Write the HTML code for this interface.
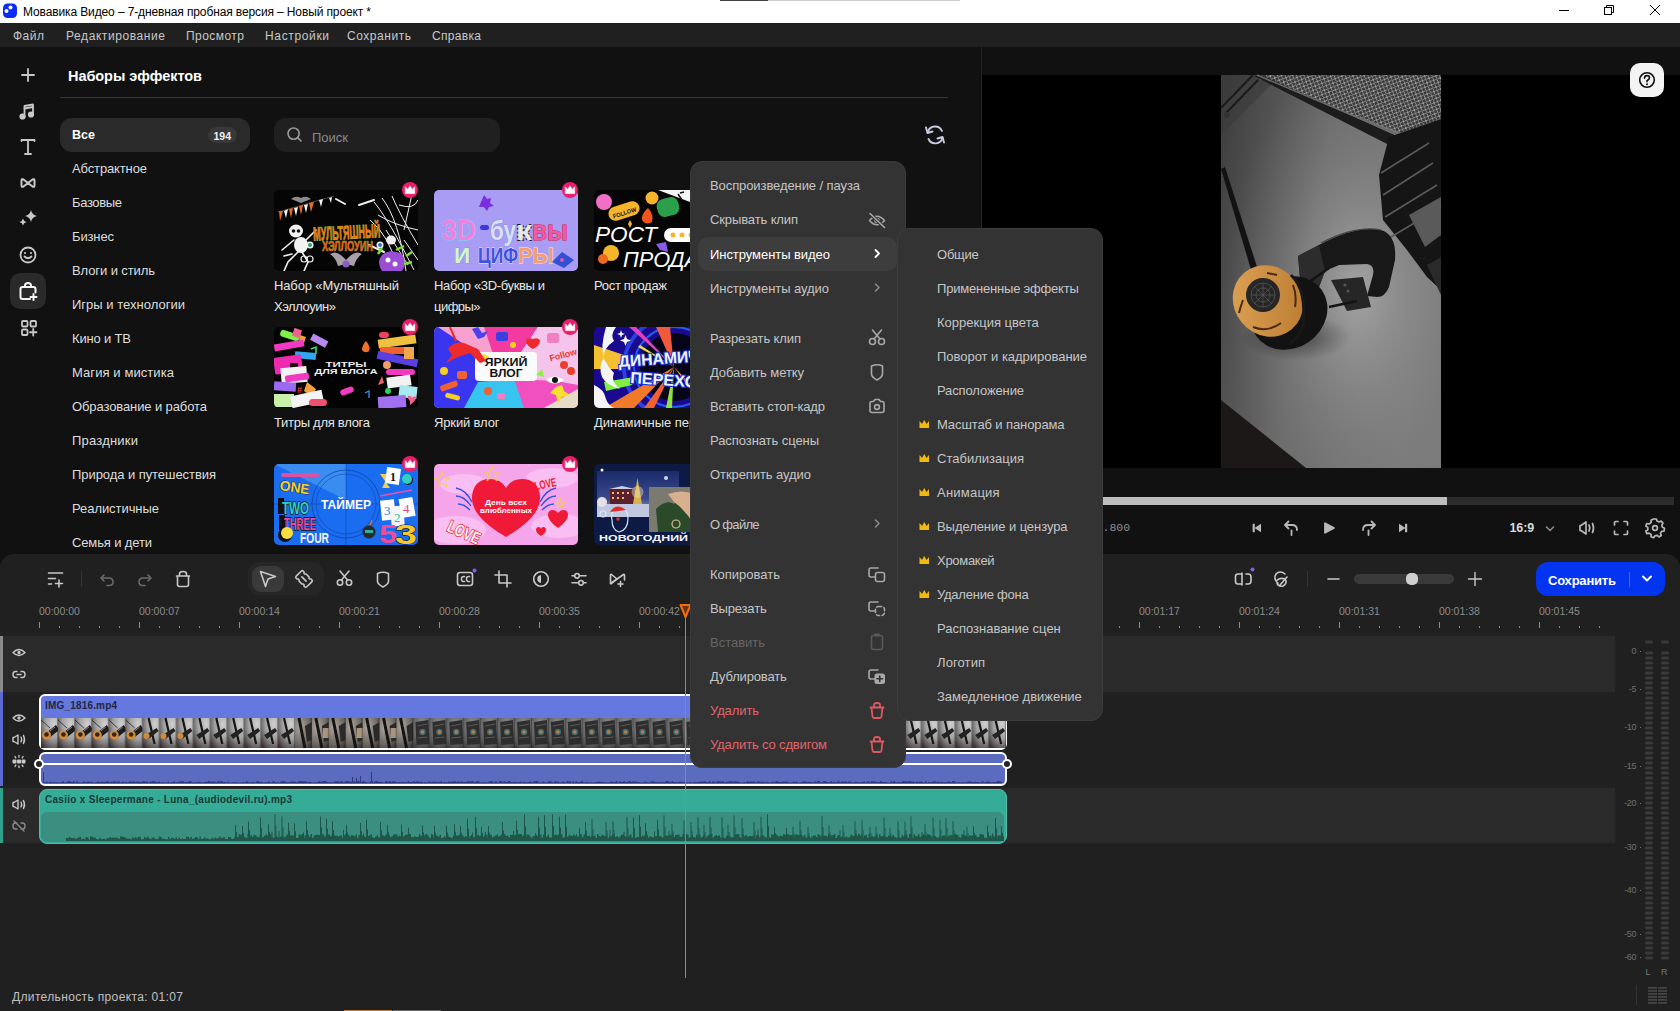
<!DOCTYPE html>
<html><head><meta charset="utf-8">
<style>
*{margin:0;padding:0;box-sizing:border-box}
html,body{width:1680px;height:1011px;overflow:hidden;background:#111;font-family:"Liberation Sans",sans-serif}
.a{position:absolute}
.t{position:absolute;white-space:nowrap;line-height:1}
svg{position:absolute;overflow:visible}
</style></head><body>
<div class="a" style="left:0px;top:0px;width:1680px;height:23px;background:#fff;"></div>
<svg style="left:0px;top:0px;" width="24" height="23" viewBox="0 0 24 23"><rect x="3" y="3.5" width="14" height="14.5" rx="4.5" fill="#0a2cf5"/><circle cx="10.5" cy="7.5" r="2" fill="#fff"/><circle cx="6.5" cy="11" r="2" fill="#fff"/></svg>
<div class="t" style="left:23px;top:5.84px;font-size:12px;color:#000;letter-spacing:-0.122px;">Мовавика Видео – 7-дневная пробная версия – Новый проект *</div>
<svg style="left:1540px;top:0px;" width="140" height="23" viewBox="0 0 140 23"><g stroke="#000" stroke-width="1" fill="none"><line x1="19" y1="10.5" x2="29" y2="10.5"/><rect x="64.5" y="7.5" width="7" height="7"/><path d="M66.5 7.5V5.5H73.5V12.5H71.5"/><path d="M110 5L120 15M120 5L110 15"/></g></svg>
<div class="a" style="left:720px;top:0px;width:48px;height:1px;background:#444;"></div>
<div class="a" style="left:768px;top:0px;width:192px;height:1px;background:#ccc;"></div>
<div class="a" style="left:0px;top:23px;width:1680px;height:24px;background:#202020;"></div>
<div class="t" style="left:13px;top:30.14px;font-size:12px;color:#c8c8c8;letter-spacing:0.499px;">Файл</div>
<div class="t" style="left:66px;top:30.14px;font-size:12px;color:#c8c8c8;letter-spacing:0.583px;">Редактирование</div>
<div class="t" style="left:186px;top:30.14px;font-size:12px;color:#c8c8c8;letter-spacing:0.457px;">Просмотр</div>
<div class="t" style="left:265px;top:30.14px;font-size:12px;color:#c8c8c8;letter-spacing:0.645px;">Настройки</div>
<div class="t" style="left:347px;top:30.14px;font-size:12px;color:#c8c8c8;letter-spacing:0.546px;">Сохранить</div>
<div class="t" style="left:432px;top:30.14px;font-size:12px;color:#c8c8c8;letter-spacing:0.321px;">Справка</div>
<div class="a" style="left:10px;top:273px;width:36px;height:36px;background:#2a2a2a;border-radius:10px"></div>
<svg style="left:0px;top:47px;" width="60" height="300" viewBox="0 0 60 300"><g fill="none" stroke="#c8c8c8" stroke-width="1.8" stroke-linecap="round" stroke-linejoin="round"><path d="M28 22V34M22 28H34"/><path d="M24.5 70V59L33 57.5V68"/><circle cx="22.5" cy="69.5" r="2.2" fill="#c8c8c8"/><circle cx="31" cy="67.5" r="2.2" fill="#c8c8c8"/><path d="M24.5 61.5L33 60"/><path d="M21.5 94V93H34.5V94M28 93V107M25 107H31"/><path d="M21.5 133.5Q21.5 131.5 23.5 132.5L28 136L32.5 132.5Q34.5 131.5 34.5 133.5V138.5Q34.5 140.5 32.5 139.5L28 136L23.5 139.5Q21.5 140.5 21.5 138.5Z" stroke-width="2"/><circle cx="28" cy="208" r="7.5"/><path d="M24.5 209.5Q28 213 31.5 209.5"/><path d="M30 252H22.5Q20.5 252 20.5 250V242Q20.5 240 22.5 240H33.5Q35.5 240 35.5 242V245.5M25 240V238.5Q25 236 28 236Q31 236 31 238.5V240M33.5 247V253M30.5 250H36.5" stroke="#f6f6f6" stroke-width="2"/><rect x="22" y="274" width="5.5" height="5.5" rx="1"/><rect x="30.5" y="274" width="5.5" height="5.5" rx="1"/><rect x="22" y="282.5" width="5.5" height="5.5" rx="1"/><path d="M33.25 282V288.5M30 285.25H36.5"/></g><g fill="#c8c8c8"><path d="M31 163Q32 168 37 169Q32 170 31 175Q30 170 25 169Q30 168 31 163Z"/><path d="M23 171.5Q23.6 174.4 26.5 175Q23.6 175.6 23 178.5Q22.4 175.6 19.5 175Q22.4 174.4 23 171.5Z"/><circle cx="25" cy="206" r="1.1"/><circle cx="31" cy="206" r="1.1"/></g></svg>
<div class="a" style="left:981px;top:47px;width:1px;height:507px;background:#222;"></div>
<div class="t" style="left:68px;top:68.73px;font-size:14.5px;color:#fff;font-weight:bold;letter-spacing:-0.058px;">Наборы эффектов</div>
<div class="a" style="left:60px;top:97px;width:888px;height:1px;background:#333;"></div>
<div class="a" style="left:60px;top:118px;width:190px;height:34px;background:#2a2a2a;border-radius:12px"></div>
<div class="a" style="left:208px;top:127px;width:29px;height:16px;background:#383838;border-radius:8px"></div>
<div class="t" style="left:213.5px;top:131.11px;font-size:10.5px;color:#eee;font-weight:bold;letter-spacing:-0.010px;">194</div>
<div class="t" style="left:72px;top:128.72px;font-size:12.5px;color:#fff;font-weight:bold;">Все</div>
<div class="t" style="left:72px;top:162.30px;font-size:13px;color:#dedede;letter-spacing:-0.131px;">Абстрактное</div>
<div class="t" style="left:72px;top:196.30px;font-size:13px;color:#dedede;letter-spacing:-0.357px;">Базовые</div>
<div class="t" style="left:72px;top:230.30px;font-size:13px;color:#dedede;letter-spacing:-0.133px;">Бизнес</div>
<div class="t" style="left:72px;top:264.30px;font-size:13px;color:#dedede;letter-spacing:-0.100px;">Влоги и стиль</div>
<div class="t" style="left:72px;top:298.30px;font-size:13px;color:#dedede;letter-spacing:0.016px;">Игры и технологии</div>
<div class="t" style="left:72px;top:332.30px;font-size:13px;color:#dedede;letter-spacing:-0.168px;">Кино и ТВ</div>
<div class="t" style="left:72px;top:366.30px;font-size:13px;color:#dedede;letter-spacing:0.082px;">Магия и мистика</div>
<div class="t" style="left:72px;top:400.30px;font-size:13px;color:#dedede;letter-spacing:-0.103px;">Образование и работа</div>
<div class="t" style="left:72px;top:434.30px;font-size:13px;color:#dedede;letter-spacing:0.211px;">Праздники</div>
<div class="t" style="left:72px;top:468.30px;font-size:13px;color:#dedede;letter-spacing:-0.061px;">Природа и путешествия</div>
<div class="t" style="left:72px;top:502.30px;font-size:13px;color:#dedede;letter-spacing:-0.059px;">Реалистичные</div>
<div class="t" style="left:72px;top:536.30px;font-size:13px;color:#dedede;letter-spacing:-0.132px;">Семья и дети</div>
<div class="a" style="left:274px;top:118px;width:226px;height:34px;background:#202020;border-radius:12px"></div>
<svg style="left:280px;top:120px;" width="30" height="30" viewBox="0 0 30 30"><g fill="none" stroke="#9a9a9a" stroke-width="1.6"><circle cx="13.6" cy="13.6" r="5.6"/><path d="M17.6 17.6L21 21" stroke-linecap="round"/></g></svg>
<div class="t" style="left:312px;top:131.00px;font-size:13px;color:#8a8a8a;letter-spacing:-0.006px;">Поиск</div>
<svg style="left:920px;top:120px;" width="30" height="30" viewBox="0 0 30 30"><g fill="none" stroke="#c9cbe0" stroke-width="1.9" stroke-linecap="round" stroke-linejoin="round"><path d="M8 11.5A7.5 7.5 0 0 1 22 11"/><path d="M22.5 18A7.5 7.5 0 0 1 8.5 19"/><path d="M6 7.5L7.5 13L12.5 11.5"/><path d="M24 22.5L22.5 17L17.5 18.5"/></g></svg>
<svg style="left:274px;top:190px" width="144" height="81" viewBox="0 0 144 81"><defs><clipPath id="c1"><rect width="144" height="81" rx="5"/></clipPath></defs><g clip-path="url(#c1)"><rect width="144" height="81" fill="#050505"/><path d="M4 22L60 6" stroke="#777" stroke-width="0.6"/><g fill="#ec6a1c"><path d="M5 21L9 21L6 31Z"/><path d="M15 19L19 18L17 28Z"/><path d="M25 16L29 15L27 25Z"/><path d="M35 13L40 12L37 22Z"/></g><g fill="#f2f2f2"><path d="M10 21L14 19L12 28Z"/><path d="M20 18L24 17L22 26Z"/><path d="M30 15L34 14L32 23Z"/><path d="M45 10L49 9L47 17Z"/><path d="M55 8L58 7L57 13Z"/></g><path d="M17 9Q22 5 27 8Q32 5 37 9L27 13Z" fill="#8a8a8a"/><g stroke="#eee" stroke-width="2" stroke-linecap="round"><path d="M62 9L71 14"/><path d="M85 15L100 10"/><path d="M95 55L110 62"/></g><g stroke="#f0f0f0" stroke-width="1" fill="none"><path d="M100 12Q115 30 140 80M108 8Q125 30 132 81M118 6Q126 25 144 55M104 25Q120 35 144 40M112 40L134 75M138 4L130 40M125 15Q140 20 144 10M96 30Q115 45 125 81M130 50L144 70"/></g><g fill="#f2f2f2"><ellipse cx="22" cy="41" rx="7" ry="6.5"/><ellipse cx="27" cy="55" rx="7" ry="8"/></g><g fill="#111"><circle cx="19.5" cy="41" r="1.8"/><circle cx="24.5" cy="41" r="1.8"/></g><g stroke="#f2f2f2" stroke-width="1.6" fill="none" stroke-linecap="round"><path d="M24 62L14 72L10 81M28 62L34 72L30 81M20 50L8 60M32 50L42 40M18 64L10 66"/></g><g fill="none" stroke="#eee" stroke-width="1.2"><circle cx="30" cy="69" r="3"/><circle cx="36" cy="69" r="3"/></g><text paint-order="stroke" x="39" y="49" font-family="Liberation Sans" font-weight="bold" font-size="19" fill="#f0781c" stroke="#7ac030" stroke-width="0.9" transform="rotate(-3 72 40)" textLength="67" lengthAdjust="spacingAndGlyphs">МУЛЬТЯШНЫЙ</text><text paint-order="stroke" x="48" y="61" font-family="Liberation Sans" font-weight="bold" font-size="15" fill="#ec5e1c" stroke="#6ab02a" stroke-width="0.7" textLength="51" lengthAdjust="spacingAndGlyphs">ХЭЛЛОУИН</text><path d="M56 64Q62 60 68 66L72 70L76 66Q82 60 88 64Q82 68 80 76L72 74L64 76Q62 68 56 64Z" fill="#a8a0a8"/><circle cx="72" cy="74" r="3.5" fill="#8a5cc0"/><circle cx="36" cy="55" r="3.5" fill="#f4f4f4"/><circle cx="36" cy="55" r="2" fill="#2aa060"/><circle cx="106" cy="55" r="3.5" fill="#f4f4f4"/><circle cx="106" cy="55" r="2" fill="#3070d0"/><ellipse cx="117" cy="50" rx="5" ry="4.5" fill="#eee"/><path d="M108 65Q116 58 128 64Q134 74 128 81H108Q102 72 108 65Z" fill="#9a4ed6"/><path d="M104 64L108 58M122 60L130 56M132 66L138 62M130 74L138 72" stroke="#7ee02a" stroke-width="2.5"/><circle cx="114" cy="70" r="2.5" fill="#fff"/><circle cx="121" cy="74" r="2.5" fill="#fff"/></g></svg>
<svg style="left:402px;top:182px" width="16" height="16" viewBox="0 0 16 16"><circle cx="8" cy="8" r="8" fill="#ea1f6a"/><path d="M3.3 4.8L5.7 7.4L8 3.9L10.3 7.4L12.7 4.8V11.6H3.3Z" fill="#fff" stroke="#fff" stroke-width="0.6" stroke-linejoin="round"/></svg>
<svg style="left:434px;top:190px" width="144" height="81" viewBox="0 0 144 81"><defs><clipPath id="c2"><rect width="144" height="81" rx="5"/></clipPath></defs><g clip-path="url(#c2)"><rect width="144" height="81" fill="#a99cf4"/><path d="M50 5L53 9L57 8L56 13L60 16L55 17L53 21L50 17L45 17L47 12Z" fill="#7a2ee0"/><text paint-order="stroke" x="8" y="50" font-family="Liberation Sans" font-weight="bold" font-size="30" fill="#f080e0" stroke="#80c8f8" stroke-width="1.5" textLength="34" lengthAdjust="spacingAndGlyphs">3D</text><rect x="46" y="35" width="9" height="5" rx="2.5" fill="#3a3ad8"/><text paint-order="stroke" x="56" y="50" font-family="Liberation Sans" font-weight="bold" font-size="28" fill="#d8e0fa" stroke="#8090e8" stroke-width="1.2" textLength="26" lengthAdjust="spacingAndGlyphs">бу</text><text paint-order="stroke" x="82" y="50" font-family="Liberation Sans" font-weight="bold" font-size="28" fill="#e8e8e8" stroke="#222" stroke-width="2" stroke-dasharray="2 2" textLength="16" lengthAdjust="spacingAndGlyphs">к</text><text paint-order="stroke" x="98" y="50" font-family="Liberation Sans" font-weight="bold" font-size="28" fill="#f05aa0" stroke="#d02040" stroke-width="1" textLength="36" lengthAdjust="spacingAndGlyphs">вы</text><text paint-order="stroke" x="20" y="73" font-family="Liberation Sans" font-weight="bold" font-size="22" fill="#e0f0c0" stroke="#40c0f0" stroke-width="1.2" textLength="16" lengthAdjust="spacingAndGlyphs">И</text><text paint-order="stroke" x="44" y="73" font-family="Liberation Sans" font-weight="bold" font-size="22" fill="#4050e0" stroke="#f0f0ff" stroke-width="0.8" textLength="40" lengthAdjust="spacingAndGlyphs">ЦИФ</text><text paint-order="stroke" x="84" y="73" font-family="Liberation Sans" font-weight="bold" font-size="22" fill="#f0a070" stroke="#f0f0f0" stroke-width="0.8" textLength="36" lengthAdjust="spacingAndGlyphs">РЫ</text><path d="M118 72L128 62L140 70L130 78Z" fill="#3050d8"/><circle cx="128" cy="70" r="2" fill="#f050a0"/></g></svg>
<svg style="left:562px;top:182px" width="16" height="16" viewBox="0 0 16 16"><circle cx="8" cy="8" r="8" fill="#ea1f6a"/><path d="M3.3 4.8L5.7 7.4L8 3.9L10.3 7.4L12.7 4.8V11.6H3.3Z" fill="#fff" stroke="#fff" stroke-width="0.6" stroke-linejoin="round"/></svg>
<svg style="left:594px;top:190px" width="144" height="81" viewBox="0 0 144 81"><defs><clipPath id="c3"><rect width="144" height="81" rx="5"/></clipPath></defs><g clip-path="url(#c3)"><rect width="144" height="81" fill="#050505"/><path d="M64 0H144V30Z" fill="#f4f4f4"/><path d="M84 4L88 10M86 3L90 2" stroke="#111" stroke-width="1.5"/><circle cx="10" cy="12" r="8" fill="#f070c8"/><rect x="14" y="14" width="32" height="14" rx="7" fill="#f5b52a" transform="rotate(-18 30 21)"/><text paint-order="stroke" x="18" y="25" font-family="Liberation Sans" font-weight="bold" font-size="6" fill="#111" transform="rotate(-18 30 21)" textLength="24" lengthAdjust="spacingAndGlyphs">FOLLOW</text><circle cx="58" cy="8" r="6.5" fill="#f5b52a"/><rect x="63" y="8" width="22" height="18" rx="7" fill="#2aa04a" transform="rotate(-15 74 17)"/><path d="M54 18Q60 24 58 32Q52 36 48 30Q47 24 54 18Z" fill="#f0541c"/><path d="M36 30L38 34L36 38L34 34Z" fill="#f5b52a"/><text paint-order="stroke" x="1" y="52" font-family="Liberation Sans" font-style="italic" font-size="22" fill="#fff" textLength="62" lengthAdjust="spacingAndGlyphs">РОСТ</text><rect x="70" y="38" width="40" height="14" rx="7" fill="#fff"/><g fill="#f5b52a"><circle cx="79" cy="45" r="2.5"/><circle cx="88" cy="45" r="2.5"/><circle cx="97" cy="45" r="2.5"/></g><text paint-order="stroke" x="29" y="77" font-family="Liberation Sans" font-style="italic" font-size="22" fill="#fff" textLength="96" lengthAdjust="spacingAndGlyphs">ПРОДАЖ</text><circle cx="17" cy="63" r="8" fill="#f5b52a"/><circle cx="9" cy="69" r="5" fill="#f06a1c"/><path d="M62 54L72 52L74 62L66 60Z" fill="#8a5ae8"/><path d="M96 30L100 26L102 34Z" fill="#f5b52a"/></g></svg>
<svg style="left:722px;top:182px" width="16" height="16" viewBox="0 0 16 16"><circle cx="8" cy="8" r="8" fill="#ea1f6a"/><path d="M3.3 4.8L5.7 7.4L8 3.9L10.3 7.4L12.7 4.8V11.6H3.3Z" fill="#fff" stroke="#fff" stroke-width="0.6" stroke-linejoin="round"/></svg>
<svg style="left:274px;top:327px" width="144" height="81" viewBox="0 0 144 81"><defs><clipPath id="c4"><rect width="144" height="81" rx="5"/></clipPath></defs><g clip-path="url(#c4)"><rect width="144" height="81" fill="#030303"/><rect x="6" y="5" width="20" height="7" rx="3.5" fill="#7ef04a" transform="rotate(18 16 8)"/><rect x="19" y="2" width="8" height="8" fill="#f06090" transform="rotate(20 23 6)"/><path d="M26 8L32 10L30 16L25 14Z" fill="#f0a040"/><rect x="0" y="15" width="30" height="7" fill="#f03ac0" transform="rotate(-10 15 18)"/><rect x="37" y="10" width="17" height="7" fill="#b88af0" transform="rotate(28 45 13)"/><path d="M37 22L42 20V27" stroke="#40e080" stroke-width="1.5" fill="none"/><rect x="21" y="25" width="21" height="7" fill="#30a8f0" transform="rotate(5 31 28)"/><rect x="0" y="29" width="28" height="17" rx="2" fill="#f02ab0" transform="rotate(-8 14 37)"/><rect x="16" y="36" width="8" height="6" rx="1" fill="#111"/><rect x="7" y="40" width="26" height="16" fill="#f2f2f2" transform="rotate(-5 20 48)"/><rect x="11" y="47" width="24" height="7" rx="2" fill="#f03ac0" transform="rotate(-8 23 50)"/><rect x="0" y="55" width="22" height="9" fill="#9a6af0" transform="rotate(4 11 59)"/><text paint-order="stroke" x="23" y="66" font-family="Liberation Sans" font-weight="bold" font-size="9" fill="#f04040">#</text><path d="M33 55L42 62L38 70L30 64Z" fill="#f0a040"/><rect x="0" y="67" width="20" height="13" fill="#c8f0a8"/><rect x="17" y="66" width="32" height="12" fill="#f4f4f4" transform="rotate(-12 33 72)"/><rect x="35" y="72" width="18" height="7" rx="3.5" fill="#f05070"/><rect x="104" y="10" width="38" height="9" fill="#f0c040" transform="rotate(-8 123 14)"/><rect x="106" y="20" width="32" height="7" rx="2" fill="#f06030"/><rect x="103" y="28" width="41" height="8" fill="#5a40e0" transform="rotate(12 123 32)"/><rect x="130" y="20" width="10" height="12" fill="#f0a850"/><rect x="112" y="42" width="29" height="6" rx="3" fill="#f03ac0"/><circle cx="113" cy="38" r="4" fill="#f0a060"/><rect x="113" y="49" width="24" height="11" fill="#f2f2f2" transform="rotate(-8 125 55)"/><path d="M108 49L110 56L104 58Z" fill="#f06070"/><rect x="125" y="59" width="18" height="12" fill="#a8e8f0" transform="rotate(6 134 65)"/><circle cx="114" cy="64" r="3" fill="#30d060"/><rect x="104" y="69" width="28" height="12" fill="#a070f0" transform="rotate(-4 118 75)"/><path d="M136 74Q133 71 134 69Q137 68 138 71Q140 68 142 70Q142 74 136 78Z" fill="#f06090"/><rect x="105" y="5" width="10" height="6" rx="3" fill="#f04060"/><path d="M92 14Q97 20 95 24Q91 27 88 23Q88 18 92 14Z" fill="#f07030"/><rect x="66" y="61" width="14" height="6" rx="3" fill="#f03ac0" transform="rotate(-20 73 64)"/><path d="M91 66L95 64V71" stroke="#4090f0" stroke-width="1.3" fill="none"/><text paint-order="stroke" x="72" y="39.5" font-family="Liberation Sans" font-weight="bold" font-size="7.5" fill="#f0f0f0" text-anchor="middle" textLength="41" lengthAdjust="spacingAndGlyphs">ТИТРЫ</text><text paint-order="stroke" x="72" y="47.2" font-family="Liberation Sans" font-weight="bold" font-size="7.5" fill="#f0f0f0" text-anchor="middle" textLength="63" lengthAdjust="spacingAndGlyphs">ДЛЯ ВЛОГА</text></g></svg>
<svg style="left:402px;top:319px" width="16" height="16" viewBox="0 0 16 16"><circle cx="8" cy="8" r="8" fill="#ea1f6a"/><path d="M3.3 4.8L5.7 7.4L8 3.9L10.3 7.4L12.7 4.8V11.6H3.3Z" fill="#fff" stroke="#fff" stroke-width="0.6" stroke-linejoin="round"/></svg>
<svg style="left:434px;top:327px" width="144" height="81" viewBox="0 0 144 81"><defs><clipPath id="c5"><rect width="144" height="81" rx="5"/></clipPath></defs><g clip-path="url(#c5)"><rect width="144" height="81" fill="#f5b8e0"/><path d="M0 0H20L60 45L44 81H0Z" fill="#3a36f0"/><path d="M4 0H50L60 30L40 24Z" fill="#f8a0d0"/><path d="M50 0H104L86 27L60 30Z" fill="#f23aa0"/><path d="M104 0H144V58L100 50L86 27Z" fill="#f5c4ec"/><path d="M30 81L44 55L80 52L95 81Z" fill="#38c4f0"/><path d="M80 52L122 54L144 58V81H90Z" fill="#f050c0"/><path d="M110 81L144 62V81Z" fill="#e8dcc8"/><rect x="41" y="25" width="62" height="29" rx="4" fill="#fbfbfb"/><path d="M48 26L56 30L52 36Z" fill="#f5e030"/><text paint-order="stroke" x="72" y="39" font-family="Liberation Sans" font-weight="bold" font-size="10" fill="#111" text-anchor="middle" textLength="43" lengthAdjust="spacingAndGlyphs">ЯРКИЙ</text><text paint-order="stroke" x="72" y="50" font-family="Liberation Sans" font-weight="bold" font-size="10" fill="#111" text-anchor="middle" textLength="33" lengthAdjust="spacingAndGlyphs">ВЛОГ</text><path d="M14 22Q20 14 30 16L44 22L52 34L46 36L36 26L24 30L12 36L18 28Z" fill="#ee2a2a"/><path d="M16 0L22 14" stroke="#ee2a2a" stroke-width="2"/><path d="M38 2L44 0L48 6L54 4L50 10L44 12Z" fill="#4a40f0"/><rect x="62" y="5" width="12" height="9" rx="2" fill="#3a40e0"/><circle cx="79" cy="18" r="3" fill="#f5d020"/><path d="M92 13Q95 10 99 12Q103 10 106 13Q106 19 99 22Q92 19 92 13Z" fill="#ee2a2a"/><rect x="113" y="6" width="12" height="10" rx="2" fill="#f080c0"/><text paint-order="stroke" x="115" y="32" font-family="Liberation Sans" font-weight="bold" font-size="9" fill="#e83a2a" transform="rotate(-15 125 28)" textLength="28" lengthAdjust="spacingAndGlyphs">Follow</text><circle cx="130" cy="38" r="4" fill="#e8402a"/><circle cx="137" cy="44" r="4" fill="#e8402a"/><circle cx="10" cy="44" r="4" fill="#f5d020"/><rect x="23" y="44" width="10" height="8" rx="2" fill="#f06030"/><rect x="6" y="56" width="18" height="6" rx="2" fill="#f06030" transform="rotate(-20 15 59)"/><rect x="11" y="67" width="15" height="5" rx="2.5" fill="#f5d020" transform="rotate(15 18 70)"/><circle cx="54" cy="64" r="4" fill="#f06030"/><rect x="63" y="66" width="8" height="6" rx="1" fill="#f080c0"/><path d="M112 53Q120 46 130 53Q120 60 112 53Z" fill="#fff"/><circle cx="121" cy="53" r="3" fill="#111"/><path d="M122 60L128 58L130 64L136 68L128 70L124 76L122 68L116 66Z" fill="#f5e030"/><path d="M102 48L108 42L110 50Z" fill="#90f040"/></g></svg>
<svg style="left:562px;top:319px" width="16" height="16" viewBox="0 0 16 16"><circle cx="8" cy="8" r="8" fill="#ea1f6a"/><path d="M3.3 4.8L5.7 7.4L8 3.9L10.3 7.4L12.7 4.8V11.6H3.3Z" fill="#fff" stroke="#fff" stroke-width="0.6" stroke-linejoin="round"/></svg>
<svg style="left:594px;top:327px" width="144" height="81" viewBox="0 0 144 81"><defs><clipPath id="c6"><rect width="144" height="81" rx="5"/></clipPath></defs><g clip-path="url(#c6)"><rect width="144" height="81" fill="#1a0a90"/><circle cx="80" cy="40" r="50" fill="none" stroke="#2a40e0" stroke-width="4"/><circle cx="80" cy="40" r="40" fill="none" stroke="#2060f0" stroke-width="2"/><circle cx="80" cy="40" r="34" fill="#060418"/><path d="M80 40L62 0H76Z" fill="#f05a3a"/><path d="M80 40L35 0H42Z" fill="#e040c0"/><path d="M80 40L46 18L44 20Z" fill="#f0e040"/><path d="M80 40L72 81H78Z" fill="#90e040"/><path d="M80 40L50 81H60Z" fill="#f06030"/><path d="M80 40L10 81H40Z" fill="#f07a2a"/><path d="M80 40L110 81H120Z" fill="#f0a030"/><path d="M10 55L40 50L38 58L12 64Z" fill="#80f040"/><path d="M0 18L30 28L28 42L0 42Z" fill="#f5c030"/><path d="M12 0H22Q16 8 20 14Q8 22 10 32Q14 40 20 46Q16 54 26 62Q12 58 8 50Q4 40 10 30Q6 20 12 0Z" fill="#f4f4f4"/><path d="M0 58Q10 62 12 72Q14 78 20 81H0Z" fill="#f4f4f4"/><path d="M26 6L27 3L28 6L31 7L28 8L27 11L26 8L23 7Z" fill="#fff"/><path d="M30 12L31.5 8L33 12L37 13.5L33 15L31.5 19L30 15L26 13.5Z" fill="#fff"/><text paint-order="stroke" x="25" y="40" font-family="Liberation Sans" font-weight="bold" font-size="16" fill="#f0f4ff" stroke="#1830d0" stroke-width="2.2" transform="rotate(-4 25 40)" textLength="118" lengthAdjust="spacingAndGlyphs">ДИНАМИЧНЫЕ</text><text paint-order="stroke" x="36" y="56" font-family="Liberation Sans" font-weight="bold" font-size="16" fill="#f0f4ff" stroke="#1830d0" stroke-width="2.2" transform="rotate(4 36 56)" textLength="94" lengthAdjust="spacingAndGlyphs">ПЕРЕХОДЫ</text></g></svg>
<svg style="left:722px;top:319px" width="16" height="16" viewBox="0 0 16 16"><circle cx="8" cy="8" r="8" fill="#ea1f6a"/><path d="M3.3 4.8L5.7 7.4L8 3.9L10.3 7.4L12.7 4.8V11.6H3.3Z" fill="#fff" stroke="#fff" stroke-width="0.6" stroke-linejoin="round"/></svg>
<svg style="left:274px;top:464px" width="144" height="81" viewBox="0 0 144 81"><defs><clipPath id="c7"><rect width="144" height="81" rx="5"/></clipPath></defs><g clip-path="url(#c7)"><rect width="144" height="81" fill="#1a6cf0"/><path d="M0 0H72V36Z" fill="#3a8cf0"/><circle cx="72" cy="40" r="34" fill="none" stroke="#0a40a0" stroke-width="0.7"/><circle cx="72" cy="40" r="30" fill="none" stroke="#0a40a0" stroke-width="0.5"/><path d="M72 0V81M0 40H144" stroke="#0a40a0" stroke-width="0.5"/><text paint-order="stroke" x="72" y="45" font-family="Liberation Sans" font-weight="bold" font-size="12" fill="#fff" text-anchor="middle" textLength="50" lengthAdjust="spacingAndGlyphs">ТАЙМЕР</text><rect x="7" y="9" width="38" height="4" rx="2" fill="#e050a0"/><text paint-order="stroke" x="6" y="28" font-family="Liberation Sans" font-weight="bold" font-size="14" fill="#f5d030" stroke="#1a1a1a" stroke-width="0.8" transform="rotate(8 20 22)" textLength="30" lengthAdjust="spacingAndGlyphs">ONE</text><rect x="4" y="34" width="6" height="16" fill="#111"/><text paint-order="stroke" x="8" y="50" font-family="Liberation Sans" font-weight="bold" font-size="17" fill="#30d0c0" stroke="#111" stroke-width="1.5" textLength="27" lengthAdjust="spacingAndGlyphs">TWO</text><rect x="5" y="51" width="6" height="15" fill="#111"/><text paint-order="stroke" x="10" y="66" font-family="Liberation Sans" font-weight="bold" font-size="16" fill="#f04a9a" stroke="#111" stroke-width="1.5" textLength="32" lengthAdjust="spacingAndGlyphs">THREE</text><circle cx="11" cy="71" r="7" fill="#111"/><circle cx="13" cy="69" r="6" fill="#f5e040"/><text paint-order="stroke" x="26" y="79" font-family="Liberation Sans" font-weight="bold" font-size="15" fill="#f4f4f4" textLength="29" lengthAdjust="spacingAndGlyphs">FOUR</text><path d="M106 10H115L108 24H116Z" fill="#f0d050"/><rect x="112" y="4" width="14" height="16" fill="#fff" transform="rotate(8 119 12)"/><text paint-order="stroke" x="116" y="17" font-family="Liberation Serif" font-weight="bold" font-size="12" fill="#111">1</text><circle cx="134" cy="16" r="5" fill="#111"/><circle cx="133" cy="15" r="5" fill="#30d0c0"/><path d="M106 32L138 26" stroke="#f050b0" stroke-width="1.5"/><rect x="107" y="36" width="14" height="20" fill="#fff" transform="rotate(-6 114 46)"/><rect x="117" y="42" width="13" height="20" fill="#f4f4f4" transform="rotate(-4 123 52)"/><rect x="126" y="34" width="14" height="19" fill="#fff" transform="rotate(-10 133 43)"/><text paint-order="stroke" x="110" y="51" font-family="Liberation Serif" font-size="13" fill="#2a80e0">3</text><text paint-order="stroke" x="120" y="58" font-family="Liberation Serif" font-size="13" fill="#30c0a0">2</text><text paint-order="stroke" x="129" y="49" font-family="Liberation Serif" font-size="13" fill="#e04a8a">4</text><text paint-order="stroke" x="105" y="79" font-family="Liberation Sans" font-weight="bold" font-size="26" fill="#f04a9a" textLength="18" lengthAdjust="spacingAndGlyphs">5</text><text paint-order="stroke" x="121" y="80" font-family="Liberation Sans" font-weight="bold" font-size="28" fill="#f5c830" stroke="#111" stroke-width="1" textLength="22" lengthAdjust="spacingAndGlyphs">3</text><circle cx="95" cy="68" r="6.5" fill="#2a2a2a"/><rect x="91" y="66" width="8" height="3" fill="#30b0a0"/><path d="M96 61L98 56" stroke="#f06a20" stroke-width="1.2"/></g></svg>
<svg style="left:402px;top:456px" width="16" height="16" viewBox="0 0 16 16"><circle cx="8" cy="8" r="8" fill="#ea1f6a"/><path d="M3.3 4.8L5.7 7.4L8 3.9L10.3 7.4L12.7 4.8V11.6H3.3Z" fill="#fff" stroke="#fff" stroke-width="0.6" stroke-linejoin="round"/></svg>
<svg style="left:434px;top:464px" width="144" height="81" viewBox="0 0 144 81"><defs><clipPath id="c8"><rect width="144" height="81" rx="5"/></clipPath></defs><g clip-path="url(#c8)"><rect width="144" height="81" fill="#f5a6ea"/><g fill="#f9bef2"><ellipse cx="22" cy="66" rx="30" ry="14"/><ellipse cx="125" cy="62" rx="28" ry="12"/><ellipse cx="30" cy="20" rx="24" ry="10"/><ellipse cx="118" cy="14" rx="26" ry="10"/></g><path d="M72 73Q36 52 38 32Q40 15 56 15Q67 15 72 24Q77 15 88 15Q104 15 106 32Q108 52 72 73Z" fill="#f01a38"/><text paint-order="stroke" x="72" y="41" font-family="Liberation Sans" font-weight="bold" font-size="8" fill="#fff" text-anchor="middle" textLength="42" lengthAdjust="spacingAndGlyphs">День всех</text><text paint-order="stroke" x="72" y="48.5" font-family="Liberation Sans" font-weight="bold" font-size="8" fill="#fff" text-anchor="middle" textLength="52" lengthAdjust="spacingAndGlyphs">влюбленных</text><g fill="none" stroke="#3050e0" stroke-width="1.3"><path d="M22 24Q32 26 38 38M22 32Q30 32 37 42M24 40Q30 40 36 46"/><path d="M122 24Q112 26 106 38M122 32Q114 32 107 42M120 40Q114 40 108 46"/></g><g fill="none" stroke="#f0d040" stroke-width="0.9"><path d="M8 8L10 14L16 14L11 17L13 23L8 19L3 23L5 17L0 14L6 14Z"/><path d="M58 2L60 8L66 8L61 11L63 17L58 13L53 17L55 11L50 8L56 8Z"/><path d="M126 34L127 38L131 38L128 40L129 44L126 42L123 44L124 40L121 38L125 38Z"/></g><text paint-order="stroke" x="14" y="74" font-family="Liberation Sans" font-weight="bold" font-size="17" fill="#f5f0f8" stroke="#f02030" stroke-width="1.6" transform="rotate(25 30 66)" textLength="34" lengthAdjust="spacingAndGlyphs">LOVE</text><text paint-order="stroke" x="100" y="24" font-family="Liberation Sans" font-weight="bold" font-size="12" fill="#f02030" transform="rotate(-12 112 18)" textLength="22" lengthAdjust="spacingAndGlyphs">LOVE</text><path d="M124 64Q114 57 114 51Q114 46 119 46Q122 46 124 49Q126 46 129 46Q134 46 134 51Q134 57 124 64Z" fill="#f01a38"/><path d="M107 72Q102 69 102 66Q102 63 105 63Q106.5 63 107 65Q107.5 63 109 63Q112 63 112 66Q112 69 107 72Z" fill="#f01a38"/></g></svg>
<svg style="left:562px;top:456px" width="16" height="16" viewBox="0 0 16 16"><circle cx="8" cy="8" r="8" fill="#ea1f6a"/><path d="M3.3 4.8L5.7 7.4L8 3.9L10.3 7.4L12.7 4.8V11.6H3.3Z" fill="#fff" stroke="#fff" stroke-width="0.6" stroke-linejoin="round"/></svg>
<svg style="left:594px;top:464px" width="144" height="81" viewBox="0 0 144 81"><defs><clipPath id="c9"><rect width="144" height="81" rx="5"/></clipPath></defs><g clip-path="url(#c9)"><defs><linearGradient id="nsky" x1="0" y1="0" x2="0" y2="1"><stop offset="0" stop-color="#1a2a6a"/><stop offset="0.6" stop-color="#3a4a8a"/><stop offset="1" stop-color="#b0b8d8"/></linearGradient></defs><rect width="144" height="81" fill="#0c1a44"/><rect x="3" y="7" width="82" height="46" fill="url(#nsky)"/><rect x="3" y="40" width="82" height="13" fill="#c0c8e0"/><rect x="16" y="24" width="24" height="16" fill="#5a2030"/><path d="M15 25L28 22L41 25Z" fill="#c8d0e8"/><g fill="#f0c060"><rect x="18" y="28" width="2" height="2"/><rect x="23" y="28" width="2" height="2"/><rect x="28" y="28" width="2" height="2"/><rect x="33" y="28" width="2" height="2"/><rect x="18" y="33" width="2" height="2"/><rect x="23" y="33" width="2" height="2"/><rect x="28" y="33" width="2" height="2"/></g><path d="M39 40L43.5 14L48 40Z" fill="#d8b050"/><circle cx="43.5" cy="28" r="6" fill="#f8e0a0" opacity="0.45"/><circle cx="8" cy="38" r="5" fill="#e8e0e8"/><rect x="55" y="23" width="89" height="45" fill="#7a7a70"/><path d="M62 45Q72 35 80 40Q86 30 96 38L100 68H64Z" fill="#2a4a2a"/><path d="M74 30Q88 25 100 30L100 60Q90 45 80 38Z" fill="#d8b090"/><circle cx="82" cy="60" r="4" fill="none" stroke="#e0c0a0" stroke-width="1.2"/><circle cx="72" cy="14" r="2" fill="#fff" opacity="0.8"/><circle cx="8" cy="6" r="1.5" fill="#fff"/><g fill="none" stroke="#d8e8ff" stroke-width="1.2"><path d="M18 56Q16 46 24 44Q34 44 34 54Q34 66 25 68Q18 66 18 56Z"/><circle cx="9" cy="50" r="3"/></g><path d="M16 48Q22 38 32 46Z" fill="#e02a2a"/><circle cx="24" cy="55" r="1.8" fill="#e02a2a"/><text paint-order="stroke" x="5" y="77" font-family="Liberation Sans" font-weight="bold" font-size="8.5" fill="#f4f4f4" textLength="89" lengthAdjust="spacingAndGlyphs">НОВОГОДНИЙ</text></g></svg>
<div class="t" style="left:274px;top:279.00px;font-size:13px;color:#e6e6e6;letter-spacing:-0.132px;">Набор «Мультяшный</div>
<div class="t" style="left:274px;top:299.50px;font-size:13px;color:#e6e6e6;letter-spacing:-0.449px;">Хэллоуин»</div>
<div class="t" style="left:434px;top:279.00px;font-size:13px;color:#e6e6e6;letter-spacing:-0.362px;">Набор «3D-буквы и</div>
<div class="t" style="left:434px;top:299.50px;font-size:13px;color:#e6e6e6;letter-spacing:-0.521px;">цифры»</div>
<div class="t" style="left:594px;top:279.00px;font-size:13px;color:#e6e6e6;letter-spacing:-0.312px;">Рост продаж</div>
<div class="t" style="left:274px;top:416.00px;font-size:13px;color:#e6e6e6;letter-spacing:-0.275px;">Титры для влога</div>
<div class="t" style="left:434px;top:416.00px;font-size:13px;color:#e6e6e6;letter-spacing:-0.139px;">Яркий влог</div>
<div class="t" style="left:594px;top:416.00px;font-size:13px;color:#e6e6e6;">Динамичные переходы</div>
<div class="a" style="left:982px;top:75px;width:698px;height:393px;background:#000;"></div>
<svg style="left:1221px;top:75px" width="220" height="393" viewBox="0 0 220 393"><defs><linearGradient id="vlin" x1="0" y1="0" x2="1" y2="0.3"><stop offset="0" stop-color="#3c3c3c"/><stop offset="0.5" stop-color="#6a6a6a"/><stop offset="1" stop-color="#7a7a7a"/></linearGradient><radialGradient id="vhl" cx="0.62" cy="0.55" r="0.6"><stop offset="0" stop-color="#b0b0b0" stop-opacity="0.8"/><stop offset="0.6" stop-color="#909090" stop-opacity="0.3"/><stop offset="1" stop-color="#808080" stop-opacity="0"/></radialGradient><linearGradient id="vwood" x1="0" y1="0" x2="1" y2="1"><stop offset="0" stop-color="#e0a558"/><stop offset="1" stop-color="#b8782e"/></linearGradient><pattern id="mesh" width="5" height="5" patternUnits="userSpaceOnUse" patternTransform="rotate(25)"><rect width="5" height="5" fill="#3a3a3a"/><path d="M0 0L5 5M5 0L0 5" stroke="#9a9a9a" stroke-width="1"/></pattern><radialGradient id="vshadow" cx="0.5" cy="0.5" r="0.5"><stop offset="0" stop-color="#000" stop-opacity="0.45"/><stop offset="1" stop-color="#000" stop-opacity="0"/></radialGradient></defs><rect width="220" height="393" fill="url(#vlin)"/><rect width="220" height="393" fill="url(#vhl)"/><path d="M0 0H60L0 60Z" fill="#3a3a3a" opacity="0.6"/><path d="M38 0H220V44L180 58L38 4Z" fill="url(#mesh)"/><path d="M33 1L40 0L178 62L172 72Z" fill="#1c1c1c"/><path d="M36 0L178 60" stroke="#6a6a6a" stroke-width="1.5"/><path d="M0 33L32 0M5 38L37 5" stroke="#1a1a1a" stroke-width="2"/><circle cx="6" cy="40" r="3" fill="#333"/><path d="M168 62L220 44V215L206 202L186 175L162 145L158 100Z" fill="#151515"/><path d="M160 98L208 68M162 120L212 88M164 142L216 110M170 162L220 132" stroke="#5a5a5a" stroke-width="1.6"/><path d="M188 140L220 122V160L204 172Z" fill="#5a5a5a"/><path d="M206 190L220 182V220Z" fill="#2a2a2a"/><path d="M0 94L4 92L37 195L31 198Z" fill="#121212"/><ellipse cx="75" cy="262" rx="55" ry="24" fill="url(#vshadow)"/><path d="M77 181L98 170Q135 150 160 155Q176 160 174 185L168 212Q164 222 156 222L146 221L152 200Q154 190 146 189L118 190L104 196L98 212L80 214Z" fill="#181818"/><path d="M77 181L98 170L104 196L98 212L80 214Z" fill="#2c2c2c"/><path d="M100 168Q135 150 160 155" fill="none" stroke="#444" stroke-width="1.2"/><path d="M110 205L142 202L150 232L126 236Z" fill="#262626"/><circle cx="124" cy="210" r="1.6" fill="#555"/><circle cx="127" cy="216" r="1.6" fill="#555"/><path d="M84 210L108 193M108 232L136 226" stroke="#141414" stroke-width="2.5"/><ellipse cx="68" cy="238" rx="40" ry="35" fill="#121212" transform="rotate(-35 68 238)"/><ellipse cx="47" cy="226" rx="34" ry="37" fill="url(#vwood)" transform="rotate(-40 47 226)"/><path d="M70 200Q86 215 82 250Q78 262 70 268" fill="none" stroke="#181818" stroke-width="3"/><circle cx="42" cy="220" r="17" fill="#262626"/><g stroke="#5a5a5a" stroke-width="0.7" fill="none"><circle cx="42" cy="220" r="12"/><circle cx="42" cy="220" r="7"/><path d="M30 220H54M42 208V232M33 211L51 229M51 211L33 229"/></g><path d="M32 252Q46 258 60 248M72 210Q76 220 74 232M18 238Q20 230 22 225M46 198L56 200" stroke="#4a2a10" stroke-width="2" fill="none"/><path d="M0 325L85 393H0Z" fill="#1c1818"/></svg>
<div class="a" style="left:1630px;top:63px;width:34px;height:34px;background:#f4f4f4;border-radius:10px"></div>
<svg style="left:1630px;top:63px;" width="34" height="34" viewBox="0 0 34 34"><g fill="none" stroke="#111" stroke-width="1.6"><circle cx="17" cy="17" r="7.3"/><path d="M14.5 15.2Q14.5 12.6 17 12.6Q19.5 12.6 19.5 14.8Q19.5 16.3 17 17.8V18.8" stroke-linecap="round"/></g><circle cx="17" cy="21.2" r="1" fill="#111"/></svg>
<div class="a" style="left:1100px;top:497px;width:574px;height:8px;background:#2c2c2c;"></div>
<div class="a" style="left:1100px;top:497px;width:347px;height:8px;background:#bdbdbd;"></div>
<div class="t" style="left:1102.5px;top:522.44px;font-size:11.5px;color:#8e8e8e;font-family:'Liberation Mono',monospace;">.800</div>
<svg style="left:1240px;top:510px;" width="440" height="40" viewBox="0 0 440 40"><g fill="#b8b8b8"><rect x="12.6" y="13.8" width="2.2" height="8.4"/><path d="M21 13.8V22.2L14.5 18Z"/><path d="M85 13.2V22.8L94 18Z" stroke="#b8b8b8" stroke-width="1.8" stroke-linejoin="round"/><rect x="165" y="13.8" width="2.2" height="8.4"/><path d="M159 13.8V22.2L165.5 18Z"/></g><g fill="none" stroke="#b8b8b8" stroke-width="1.8" stroke-linecap="round" stroke-linejoin="round"><path d="M48.5 11.5L45 15L48.5 18.5"/><path d="M45.5 15H52Q57 15 57 20"/><path d="M51.5 20.5V25"/><path d="M131.5 11.5L135 15L131.5 18.5"/><path d="M134.5 15H128Q123 15 123 20"/><path d="M128.5 20.5V25"/></g></svg>
<div class="t" style="left:1509.6px;top:522.42px;font-size:12.5px;color:#d8d8d8;font-weight:bold;letter-spacing:-0.173px;font-weight:600;">16:9</div>
<svg style="left:1540px;top:515px;" width="140" height="30" viewBox="0 0 140 30"><g fill="none" stroke="#8a8a8a" stroke-width="1.6" stroke-linecap="round" stroke-linejoin="round"><path d="M6.5 12L10 15.5L13.5 12"/></g><g fill="none" stroke="#b8b8b8" stroke-width="1.7" stroke-linecap="round" stroke-linejoin="round"><path d="M41 10.5L46 7V19L41 15.5H40Q40 13 40 10.5Z"/><path d="M49 10Q50.5 13 49 16"/><path d="M52.5 8.5Q54.5 13 52.5 17.5"/><path d="M74.5 10V7.5Q74.5 6.5 75.5 6.5H78M84 6.5H86.5Q87.5 6.5 87.5 7.5V10M87.5 16V18.5Q87.5 19.5 86.5 19.5H84M78 19.5H75.5Q74.5 19.5 74.5 18.5V16"/><circle cx="115" cy="13" r="2.4"/><path d="M113.6 5.5H116.4L117 7.6L119.2 8.6L121.2 7.6L123 9.6L121.8 11.6L122.4 13.8L124.5 14.8L124 17.6L121.6 17.9L120.4 19.9L121.3 22L119 23.5L117.3 21.9L115 22.3L113.6 24.2L111 23.3L111.1 21L109.1 19.6L106.8 20.1L105.8 17.5L107.8 16.3L107.8 13.9L105.8 12.6L106.8 10L109.1 10.5L111.1 9.1L111 6.8Z" transform="translate(0,-1.5)"/></g></svg>
<div class="a" style="left:0px;top:554px;width:1680px;height:457px;background:#202020;border-radius:14px 14px 0 0"></div>
<div class="a" style="left:248px;top:562px;width:76px;height:33px;background:#262626;border-radius:12px"></div>
<div class="a" style="left:252px;top:566px;width:32px;height:26px;background:#3a3a3a;border-radius:9px"></div>
<div class="a" style="left:81px;top:571px;width:1px;height:16px;background:#333;"></div>
<div class="a" style="left:1307px;top:571px;width:1px;height:16px;background:#333;"></div>
<svg style="left:0px;top:555px;" width="700" height="50" viewBox="0 0 700 50"><g fill="none" stroke="#c8c8c8" stroke-width="1.6" stroke-linecap="round" stroke-linejoin="round"><path d="M48.5 18H62.5M48.5 23.5H55.5M48.5 29H51.5M55.5 28.5H62.5M59 25V32"/><path d="M176.5 21H189.5M177.5 21.5V29.5Q177.5 31.5 179.5 31.5H186.5Q188.5 31.5 188.5 29.5V21.5M179.5 21V19Q179.5 16.5 183 16.5Q186.5 16.5 186.5 19V21"/><path d="M260.5 16.5L275.5 21.5L268 24L265.5 31.5Z"/><g transform="rotate(-45 304 24)"><path d="M299 18Q299 16.5 300.5 16.5H307.5Q309 16.5 309 18V19L308 20V21L309 22V26L308 27V28L309 29V30Q309 31.5 307.5 31.5H300.5Q299 31.5 299 30V29L300 28V27L299 26V22L300 21V20L299 19Z"/><path d="M304 21V27"/></g><circle cx="340" cy="27.5" r="2.7"/><circle cx="349" cy="27.5" r="2.7"/><path d="M341.5 25L349 16M347.5 25L340 16"/><path d="M377.5 18.5Q383 16 388.5 18.5V26.5Q388.5 29 383 32Q377.5 29 377.5 26.5Z"/><rect x="457.5" y="17.5" width="15" height="13" rx="2.5"/><path d="M464.5 21.5Q461.5 21 461.5 24Q461.5 27 464.5 26.5M469.5 21.5Q466.5 21 466.5 24Q466.5 27 469.5 26.5"/><path d="M499 16V28H511M495 20H507V32"/><circle cx="541" cy="24" r="7.3"/><path d="M572 20.8H586M572 27.8H586"/><circle cx="577" cy="20.8" r="2.3" fill="#202020"/><circle cx="581" cy="27.8" r="2.3" fill="#202020"/><path d="M610.5 20Q610.5 19 611.5 19.5L617 24L611.5 28.5Q610.5 29 610.5 28Z"/><path d="M610.5 28.5L623.5 19.5Q624.5 19 624.5 20.5V25"/><path d="M620.5 26.5V31.5M618 29H623"/></g><path d="M541 20V28Q537.3 27.5 537.3 24Q537.3 20.5 541 20Z" fill="#c8c8c8"/><g fill="none" stroke="#6a6a6a" stroke-width="1.6" stroke-linecap="round" stroke-linejoin="round"><path d="M104 20L101 23L104 26"/><path d="M101.5 23H109Q113 23 113 27Q113 30.5 109 30.5H107"/><path d="M148 20L151 23L148 26"/><path d="M150.5 23H143Q139 23 139 27Q139 30.5 143 30.5H145"/></g><circle cx="474.5" cy="15.5" r="2" fill="#8a5af0"/></svg>
<svg style="left:1220px;top:555px;" width="460" height="50" viewBox="0 0 460 50"><g fill="none" stroke="#c8c8c8" stroke-width="1.6" stroke-linecap="round" stroke-linejoin="round"><path d="M22 18V30M22 19H18Q15.5 19 15.5 21.5V26.5Q15.5 29 18 29H22M26 19H28Q31 19 31 22V26Q31 29 28 29H26"/><path d="M58 28Q53 24 56 19Q60 15 65 19M56 26Q60 22 65 24Q68 28 63 31Q58 32 57 28M60 30L67 22"/><path d="M108 24H119"/><path d="M248.5 24H261.5M255 17.5V30.5" stroke-width="1.4"/></g><circle cx="32.5" cy="14.5" r="2" fill="#8a5af0"/></svg>
<div class="a" style="left:1354px;top:574px;width:100px;height:10px;background:#3a3a3a;border-radius:5px"></div>
<div class="a" style="left:1406px;top:573px;width:12px;height:12px;border-radius:5px;background:#cfcfcf"></div>
<div class="a" style="left:1536px;top:562px;width:129px;height:34px;background:#0335f0;border-radius:12px"></div>
<div class="t" style="left:1548px;top:573.50px;font-size:13px;color:#fff;font-weight:bold;letter-spacing:-0.201px;">Сохранить</div>
<div class="a" style="left:1629px;top:572px;width:1px;height:15px;background:#4a6af5;"></div>
<svg style="left:1630px;top:562px;" width="40" height="34" viewBox="0 0 40 34"><path d="M13 14.5L17 18.5L21 14.5" fill="none" stroke="#fff" stroke-width="2" stroke-linecap="round" stroke-linejoin="round"/></svg>
<div class="t" style="left:39px;top:606.11px;font-size:10.5px;color:#8c8c8c;">00:00:00</div>
<div class="t" style="left:139px;top:606.11px;font-size:10.5px;color:#8c8c8c;">00:00:07</div>
<div class="t" style="left:239px;top:606.11px;font-size:10.5px;color:#8c8c8c;">00:00:14</div>
<div class="t" style="left:339px;top:606.11px;font-size:10.5px;color:#8c8c8c;">00:00:21</div>
<div class="t" style="left:439px;top:606.11px;font-size:10.5px;color:#8c8c8c;">00:00:28</div>
<div class="t" style="left:539px;top:606.11px;font-size:10.5px;color:#8c8c8c;">00:00:35</div>
<div class="t" style="left:639px;top:606.11px;font-size:10.5px;color:#8c8c8c;">00:00:42</div>
<div class="t" style="left:739px;top:606.11px;font-size:10.5px;color:#8c8c8c;">00:00:49</div>
<div class="t" style="left:839px;top:606.11px;font-size:10.5px;color:#8c8c8c;">00:00:56</div>
<div class="t" style="left:939px;top:606.11px;font-size:10.5px;color:#8c8c8c;">00:01:03</div>
<div class="t" style="left:1039px;top:606.11px;font-size:10.5px;color:#8c8c8c;">00:01:10</div>
<div class="t" style="left:1139px;top:606.11px;font-size:10.5px;color:#8c8c8c;">00:01:17</div>
<div class="t" style="left:1239px;top:606.11px;font-size:10.5px;color:#8c8c8c;">00:01:24</div>
<div class="t" style="left:1339px;top:606.11px;font-size:10.5px;color:#8c8c8c;">00:01:31</div>
<div class="t" style="left:1439px;top:606.11px;font-size:10.5px;color:#8c8c8c;">00:01:38</div>
<div class="t" style="left:1539px;top:606.11px;font-size:10.5px;color:#8c8c8c;">00:01:45</div>
<svg style="left:0px;top:0px;pointer-events:none" width="1680" height="1011" viewBox="0 0 1680 1011"><g fill="#8c8c8c"><rect x="39.0" y="622" width="1" height="6"/><rect x="59.0" y="626" width="1" height="2"/><rect x="79.0" y="626" width="1" height="2"/><rect x="99.0" y="626" width="1" height="2"/><rect x="119.0" y="626" width="1" height="2"/><rect x="139.0" y="622" width="1" height="6"/><rect x="159.0" y="626" width="1" height="2"/><rect x="179.0" y="626" width="1" height="2"/><rect x="199.0" y="626" width="1" height="2"/><rect x="219.0" y="626" width="1" height="2"/><rect x="239.0" y="622" width="1" height="6"/><rect x="259.0" y="626" width="1" height="2"/><rect x="279.0" y="626" width="1" height="2"/><rect x="299.0" y="626" width="1" height="2"/><rect x="319.0" y="626" width="1" height="2"/><rect x="339.0" y="622" width="1" height="6"/><rect x="359.0" y="626" width="1" height="2"/><rect x="379.0" y="626" width="1" height="2"/><rect x="399.0" y="626" width="1" height="2"/><rect x="419.0" y="626" width="1" height="2"/><rect x="439.0" y="622" width="1" height="6"/><rect x="459.0" y="626" width="1" height="2"/><rect x="479.0" y="626" width="1" height="2"/><rect x="499.0" y="626" width="1" height="2"/><rect x="519.0" y="626" width="1" height="2"/><rect x="539.0" y="622" width="1" height="6"/><rect x="559.0" y="626" width="1" height="2"/><rect x="579.0" y="626" width="1" height="2"/><rect x="599.0" y="626" width="1" height="2"/><rect x="619.0" y="626" width="1" height="2"/><rect x="639.0" y="622" width="1" height="6"/><rect x="659.0" y="626" width="1" height="2"/><rect x="679.0" y="626" width="1" height="2"/><rect x="699.0" y="626" width="1" height="2"/><rect x="719.0" y="626" width="1" height="2"/><rect x="739.0" y="622" width="1" height="6"/><rect x="759.0" y="626" width="1" height="2"/><rect x="779.0" y="626" width="1" height="2"/><rect x="799.0" y="626" width="1" height="2"/><rect x="819.0" y="626" width="1" height="2"/><rect x="839.0" y="622" width="1" height="6"/><rect x="859.0" y="626" width="1" height="2"/><rect x="879.0" y="626" width="1" height="2"/><rect x="899.0" y="626" width="1" height="2"/><rect x="919.0" y="626" width="1" height="2"/><rect x="939.0" y="622" width="1" height="6"/><rect x="959.0" y="626" width="1" height="2"/><rect x="979.0" y="626" width="1" height="2"/><rect x="999.0" y="626" width="1" height="2"/><rect x="1019.0" y="626" width="1" height="2"/><rect x="1039.0" y="622" width="1" height="6"/><rect x="1059.0" y="626" width="1" height="2"/><rect x="1079.0" y="626" width="1" height="2"/><rect x="1099.0" y="626" width="1" height="2"/><rect x="1119.0" y="626" width="1" height="2"/><rect x="1139.0" y="622" width="1" height="6"/><rect x="1159.0" y="626" width="1" height="2"/><rect x="1179.0" y="626" width="1" height="2"/><rect x="1199.0" y="626" width="1" height="2"/><rect x="1219.0" y="626" width="1" height="2"/><rect x="1239.0" y="622" width="1" height="6"/><rect x="1259.0" y="626" width="1" height="2"/><rect x="1279.0" y="626" width="1" height="2"/><rect x="1299.0" y="626" width="1" height="2"/><rect x="1319.0" y="626" width="1" height="2"/><rect x="1339.0" y="622" width="1" height="6"/><rect x="1359.0" y="626" width="1" height="2"/><rect x="1379.0" y="626" width="1" height="2"/><rect x="1399.0" y="626" width="1" height="2"/><rect x="1419.0" y="626" width="1" height="2"/><rect x="1439.0" y="622" width="1" height="6"/><rect x="1459.0" y="626" width="1" height="2"/><rect x="1479.0" y="626" width="1" height="2"/><rect x="1499.0" y="626" width="1" height="2"/><rect x="1519.0" y="626" width="1" height="2"/><rect x="1539.0" y="622" width="1" height="6"/><rect x="1559.0" y="626" width="1" height="2"/><rect x="1579.0" y="626" width="1" height="2"/><rect x="1599.0" y="626" width="1" height="2"/></g></svg>
<div class="a" style="left:0px;top:636px;width:1615px;height:56px;background:#2a2a2a;"></div>
<div class="a" style="left:0px;top:636px;width:3px;height:56px;background:#8a8a8a;"></div>
<div class="a" style="left:0px;top:692px;width:3px;height:94px;background:#5a6ad0;"></div>
<div class="a" style="left:0px;top:788px;width:1615px;height:55px;background:#2a2a2a;"></div>
<div class="a" style="left:0px;top:788px;width:3px;height:55px;background:#2fa08c;"></div>
<svg style="left:0px;top:636px;" width="40" height="220" viewBox="0 0 40 220"><g fill="none" stroke="#c8c8c8" stroke-width="1.4" stroke-linecap="round" stroke-linejoin="round"><path d="M13 16.5Q19 10.5 25 16.5Q19 22.5 13 16.5Z"/><circle cx="19" cy="16.5" r="1" fill="#c8c8c8"/><path d="M17 35.5H15.5Q13 35.5 13 38.5Q13 41.5 15.5 41.5H17M21 35.5H22.5Q25 35.5 25 38.5Q25 41.5 22.5 41.5H21M17 38.5H21"/><path d="M13 82Q19 76 25 82Q19 88 13 82Z"/><circle cx="19" cy="82" r="1" fill="#c8c8c8"/><path d="M14 101.5L18 99V108L14 105.5H13V101.5Z"/><path d="M21 101Q22.5 103.5 21 106M23.5 99.5Q25.5 103.5 23.5 107.5"/><path d="M19 119.5V121M19 130V131.5M15 120.5L15.8 121.8M23 120.5L22.2 121.8M15 130.5L15.8 129.2M23 130.5L22.2 129.2"/><path d="M14 166.5L18 164V173L14 170.5H13V166.5Z"/><path d="M21 166Q22.5 168.5 21 171M23.5 164.5Q25.5 168.5 23.5 172.5"/><path d="M17 187H15.5Q13 187 13 190Q13 193 15.5 193H17M21 187H22.5Q25 187 25 190Q25 193 22.5 193H21M14 185L24 195" stroke="#8a8a8a"/></g><g fill="#c8c8c8"><rect x="12.5" y="123.5" width="4" height="4" rx="1"/><rect x="17" y="123.5" width="4" height="4" rx="1"/><rect x="21.5" y="123.5" width="4" height="4" rx="1"/></g></svg>
<div class="a" style="left:39px;top:694px;width:968px;height:56px;border:2px solid #fff;border-radius:6px;background:#6478e0;overflow:hidden"><div class="a" style="left:0;top:22px;width:964px;height:30px;background:#777"></div></div>
<svg style="left:41px;top:718px;" width="964" height="30" viewBox="0 0 964 30"><defs><radialGradient id="tgr" cx="0.75" cy="0.2" r="1"><stop offset="0" stop-color="#d0d0d0"/><stop offset="0.5" stop-color="#a0a0a0"/><stop offset="1" stop-color="#3a3030"/></radialGradient><radialGradient id="tgm" cx="0.3" cy="0.3" r="1"><stop offset="0" stop-color="#b0a8a0"/><stop offset="0.6" stop-color="#6a6460"/><stop offset="1" stop-color="#2a2420"/></radialGradient><radialGradient id="tgd" cx="0.5" cy="0.3" r="1"><stop offset="0" stop-color="#9a9a9a"/><stop offset="0.6" stop-color="#5a5a5a"/><stop offset="1" stop-color="#222"/></radialGradient></defs><g transform="translate(0.00,0)"><rect width="17" height="30" fill="url(#tgr)"/><path d="M0 2L9 10" stroke="#222" stroke-width="0.8"/><path d="M5 15L15 7L17 10L17 13L8 20Z" fill="#1c1c1c"/><path d="M9 13L14 9" stroke="#888" stroke-width="1"/><circle cx="5.5" cy="17" r="4.5" fill="#d88a34"/><circle cx="5.5" cy="16.5" r="2.3" fill="#2a2a2a"/><rect x="16" y="0" width="1" height="30" fill="#111" opacity="0.35"/></g><g transform="translate(16.93,0)"><rect width="17" height="30" fill="url(#tgr)"/><path d="M0 2L9 10" stroke="#222" stroke-width="0.8"/><path d="M5 15L15 7L17 10L17 13L8 20Z" fill="#1c1c1c"/><path d="M9 13L14 9" stroke="#888" stroke-width="1"/><circle cx="5.5" cy="17" r="4.5" fill="#d88a34"/><circle cx="5.5" cy="16.5" r="2.3" fill="#2a2a2a"/><rect x="16" y="0" width="1" height="30" fill="#111" opacity="0.35"/></g><g transform="translate(33.86,0)"><rect width="17" height="30" fill="url(#tgr)"/><path d="M0 2L9 10" stroke="#222" stroke-width="0.8"/><path d="M5 15L15 7L17 10L17 13L8 20Z" fill="#1c1c1c"/><path d="M9 13L14 9" stroke="#888" stroke-width="1"/><circle cx="5.5" cy="17" r="4.5" fill="#d88a34"/><circle cx="5.5" cy="16.5" r="2.3" fill="#2a2a2a"/><rect x="16" y="0" width="1" height="30" fill="#111" opacity="0.35"/></g><g transform="translate(50.79,0)"><rect width="17" height="30" fill="url(#tgr)"/><path d="M0 2L9 10" stroke="#222" stroke-width="0.8"/><path d="M5 15L15 7L17 10L17 13L8 20Z" fill="#1c1c1c"/><path d="M9 13L14 9" stroke="#888" stroke-width="1"/><circle cx="5.5" cy="17" r="4.5" fill="#d88a34"/><circle cx="5.5" cy="16.5" r="2.3" fill="#2a2a2a"/><rect x="16" y="0" width="1" height="30" fill="#111" opacity="0.35"/></g><g transform="translate(67.72,0)"><rect width="17" height="30" fill="url(#tgr)"/><path d="M0 2L9 10" stroke="#222" stroke-width="0.8"/><path d="M5 15L15 7L17 10L17 13L8 20Z" fill="#1c1c1c"/><path d="M9 13L14 9" stroke="#888" stroke-width="1"/><circle cx="5.5" cy="17" r="4.5" fill="#d88a34"/><circle cx="5.5" cy="16.5" r="2.3" fill="#2a2a2a"/><rect x="16" y="0" width="1" height="30" fill="#111" opacity="0.35"/></g><g transform="translate(84.65,0)"><rect width="17" height="30" fill="url(#tgr)"/><path d="M0 2L9 10" stroke="#222" stroke-width="0.8"/><path d="M5 15L15 7L17 10L17 13L8 20Z" fill="#1c1c1c"/><path d="M9 13L14 9" stroke="#888" stroke-width="1"/><circle cx="5.5" cy="17" r="4.5" fill="#d88a34"/><circle cx="5.5" cy="16.5" r="2.3" fill="#2a2a2a"/><rect x="16" y="0" width="1" height="30" fill="#111" opacity="0.35"/></g><g transform="translate(101.58,0)"><rect width="17" height="30" fill="url(#tgr)"/><path d="M6 0L12 26" stroke="#151515" stroke-width="2.2"/><path d="M3 17L14 10L16 13L6 21Z" fill="#222"/><circle cx="4" cy="18" r="3" fill="#d08a3a"/><rect x="16" y="0" width="1" height="30" fill="#111" opacity="0.35"/></g><g transform="translate(118.51,0)"><rect width="17" height="30" fill="url(#tgr)"/><path d="M6 0L12 26" stroke="#151515" stroke-width="2.2"/><path d="M3 17L14 10L16 13L6 21Z" fill="#222"/><circle cx="4" cy="18" r="3" fill="#d08a3a"/><rect x="16" y="0" width="1" height="30" fill="#111" opacity="0.35"/></g><g transform="translate(135.44,0)"><rect width="17" height="30" fill="url(#tgr)"/><path d="M6 0L12 26" stroke="#151515" stroke-width="2.2"/><path d="M3 17L14 10L16 13L6 21Z" fill="#222"/><circle cx="4" cy="18" r="3" fill="#d08a3a"/><rect x="16" y="0" width="1" height="30" fill="#111" opacity="0.35"/></g><g transform="translate(152.37,0)"><rect width="17" height="30" fill="url(#tgr)"/><path d="M6 0L12 26" stroke="#151515" stroke-width="2.2"/><path d="M3 17L14 10L16 13L6 21Z" fill="#222"/><rect x="16" y="0" width="1" height="30" fill="#111" opacity="0.35"/></g><g transform="translate(169.30,0)"><rect width="17" height="30" fill="url(#tgr)"/><path d="M6 0L12 26" stroke="#151515" stroke-width="2.2"/><path d="M3 17L14 10L16 13L6 21Z" fill="#222"/><rect x="16" y="0" width="1" height="30" fill="#111" opacity="0.35"/></g><g transform="translate(186.23,0)"><rect width="17" height="30" fill="url(#tgr)"/><path d="M6 0L12 26" stroke="#151515" stroke-width="2.2"/><path d="M3 17L14 10L16 13L6 21Z" fill="#222"/><rect x="16" y="0" width="1" height="30" fill="#111" opacity="0.35"/></g><g transform="translate(203.16,0)"><rect width="17" height="30" fill="url(#tgr)"/><path d="M6 0L12 26" stroke="#151515" stroke-width="2.2"/><path d="M3 17L14 10L16 13L6 21Z" fill="#222"/><rect x="16" y="0" width="1" height="30" fill="#111" opacity="0.35"/></g><g transform="translate(220.09,0)"><rect width="17" height="30" fill="url(#tgr)"/><path d="M6 0L12 26" stroke="#151515" stroke-width="2.2"/><path d="M3 17L14 10L16 13L6 21Z" fill="#222"/><rect x="16" y="0" width="1" height="30" fill="#111" opacity="0.35"/></g><g transform="translate(237.02,0)"><rect width="17" height="30" fill="url(#tgr)"/><path d="M6 0L12 26" stroke="#151515" stroke-width="2.2"/><path d="M3 17L14 10L16 13L6 21Z" fill="#222"/><rect x="16" y="0" width="1" height="30" fill="#111" opacity="0.35"/></g><g transform="translate(253.95,0)"><rect width="17" height="30" fill="url(#tgm)"/><path d="M4 0L10 30" stroke="#141414" stroke-width="3"/><path d="M10 8L17 4V22L12 24Z" fill="#2a2a2a"/><rect x="16" y="0" width="1" height="30" fill="#111" opacity="0.35"/></g><g transform="translate(270.88,0)"><rect width="17" height="30" fill="url(#tgm)"/><path d="M4 0L10 30" stroke="#141414" stroke-width="3"/><path d="M10 8L17 4V22L12 24Z" fill="#2a2a2a"/><rect x="11" y="10" width="6" height="10" fill="#c8b090" opacity="0.8"/><rect x="16" y="0" width="1" height="30" fill="#111" opacity="0.35"/></g><g transform="translate(287.81,0)"><rect width="17" height="30" fill="url(#tgm)"/><path d="M4 0L10 30" stroke="#141414" stroke-width="3"/><path d="M10 8L17 4V22L12 24Z" fill="#2a2a2a"/><rect x="16" y="0" width="1" height="30" fill="#111" opacity="0.35"/></g><g transform="translate(304.74,0)"><rect width="17" height="30" fill="url(#tgm)"/><path d="M4 0L10 30" stroke="#141414" stroke-width="3"/><path d="M10 8L17 4V22L12 24Z" fill="#2a2a2a"/><rect x="11" y="10" width="6" height="10" fill="#c8b090" opacity="0.8"/><rect x="16" y="0" width="1" height="30" fill="#111" opacity="0.35"/></g><g transform="translate(321.67,0)"><rect width="17" height="30" fill="url(#tgm)"/><path d="M4 0L10 30" stroke="#141414" stroke-width="3"/><path d="M10 8L17 4V22L12 24Z" fill="#2a2a2a"/><rect x="16" y="0" width="1" height="30" fill="#111" opacity="0.35"/></g><g transform="translate(338.60,0)"><rect width="17" height="30" fill="url(#tgm)"/><path d="M4 0L10 30" stroke="#141414" stroke-width="3"/><path d="M10 8L17 4V22L12 24Z" fill="#2a2a2a"/><rect x="11" y="10" width="6" height="10" fill="#c8b090" opacity="0.8"/><rect x="16" y="0" width="1" height="30" fill="#111" opacity="0.35"/></g><g transform="translate(355.53,0)"><rect width="17" height="30" fill="url(#tgm)"/><path d="M4 0L10 30" stroke="#141414" stroke-width="3"/><path d="M10 8L17 4V22L12 24Z" fill="#2a2a2a"/><rect x="16" y="0" width="1" height="30" fill="#111" opacity="0.35"/></g><g transform="translate(372.46,0)"><rect width="17" height="30" fill="url(#tgd)"/><path d="M2 4L15 2L16 26L3 27Z" fill="#2e2e2e"/><path d="M4 8L14 6M4 20L14 19" stroke="#5a5a5a" stroke-width="1"/><circle cx="9" cy="14" r="3.2" fill="#3a6a78"/><circle cx="9" cy="14" r="1.8" fill="#d07a2a"/><rect x="16" y="0" width="1" height="30" fill="#111" opacity="0.35"/></g><g transform="translate(389.39,0)"><rect width="17" height="30" fill="url(#tgd)"/><path d="M2 4L15 2L16 26L3 27Z" fill="#2e2e2e"/><path d="M4 8L14 6M4 20L14 19" stroke="#5a5a5a" stroke-width="1"/><circle cx="9" cy="14" r="3.2" fill="#3a6a78"/><circle cx="9" cy="14" r="1.8" fill="#d07a2a"/><rect x="16" y="0" width="1" height="30" fill="#111" opacity="0.35"/></g><g transform="translate(406.32,0)"><rect width="17" height="30" fill="url(#tgd)"/><path d="M2 4L15 2L16 26L3 27Z" fill="#2e2e2e"/><path d="M4 8L14 6M4 20L14 19" stroke="#5a5a5a" stroke-width="1"/><circle cx="9" cy="14" r="3.2" fill="#3a6a78"/><circle cx="9" cy="14" r="1.8" fill="#d07a2a"/><rect x="16" y="0" width="1" height="30" fill="#111" opacity="0.35"/></g><g transform="translate(423.25,0)"><rect width="17" height="30" fill="url(#tgd)"/><path d="M2 4L15 2L16 26L3 27Z" fill="#2e2e2e"/><path d="M4 8L14 6M4 20L14 19" stroke="#5a5a5a" stroke-width="1"/><circle cx="9" cy="14" r="3.2" fill="#3a6a78"/><circle cx="9" cy="14" r="1.8" fill="#d07a2a"/><rect x="16" y="0" width="1" height="30" fill="#111" opacity="0.35"/></g><g transform="translate(440.18,0)"><rect width="17" height="30" fill="url(#tgd)"/><path d="M2 4L15 2L16 26L3 27Z" fill="#2e2e2e"/><path d="M4 8L14 6M4 20L14 19" stroke="#5a5a5a" stroke-width="1"/><circle cx="9" cy="14" r="3.2" fill="#3a6a78"/><circle cx="9" cy="14" r="1.8" fill="#d07a2a"/><rect x="16" y="0" width="1" height="30" fill="#111" opacity="0.35"/></g><g transform="translate(457.11,0)"><rect width="17" height="30" fill="url(#tgd)"/><path d="M2 4L15 2L16 26L3 27Z" fill="#2e2e2e"/><path d="M4 8L14 6M4 20L14 19" stroke="#5a5a5a" stroke-width="1"/><circle cx="9" cy="14" r="3.2" fill="#3a6a78"/><circle cx="9" cy="14" r="1.8" fill="#d07a2a"/><rect x="16" y="0" width="1" height="30" fill="#111" opacity="0.35"/></g><g transform="translate(474.04,0)"><rect width="17" height="30" fill="url(#tgd)"/><path d="M2 4L15 2L16 26L3 27Z" fill="#2e2e2e"/><path d="M4 8L14 6M4 20L14 19" stroke="#5a5a5a" stroke-width="1"/><circle cx="9" cy="14" r="3.2" fill="#3a6a78"/><circle cx="9" cy="14" r="1.8" fill="#d07a2a"/><rect x="16" y="0" width="1" height="30" fill="#111" opacity="0.35"/></g><g transform="translate(490.97,0)"><rect width="17" height="30" fill="url(#tgd)"/><path d="M2 4L15 2L16 26L3 27Z" fill="#2e2e2e"/><path d="M4 8L14 6M4 20L14 19" stroke="#5a5a5a" stroke-width="1"/><circle cx="9" cy="14" r="3.2" fill="#3a6a78"/><circle cx="9" cy="14" r="1.8" fill="#d07a2a"/><rect x="16" y="0" width="1" height="30" fill="#111" opacity="0.35"/></g><g transform="translate(507.90,0)"><rect width="17" height="30" fill="url(#tgd)"/><path d="M2 4L15 2L16 26L3 27Z" fill="#2e2e2e"/><path d="M4 8L14 6M4 20L14 19" stroke="#5a5a5a" stroke-width="1"/><circle cx="9" cy="14" r="3.2" fill="#3a6a78"/><circle cx="9" cy="14" r="1.8" fill="#d07a2a"/><rect x="16" y="0" width="1" height="30" fill="#111" opacity="0.35"/></g><g transform="translate(524.83,0)"><rect width="17" height="30" fill="url(#tgd)"/><path d="M2 4L15 2L16 26L3 27Z" fill="#2e2e2e"/><path d="M4 8L14 6M4 20L14 19" stroke="#5a5a5a" stroke-width="1"/><circle cx="9" cy="14" r="3.2" fill="#3a6a78"/><circle cx="9" cy="14" r="1.8" fill="#d07a2a"/><rect x="16" y="0" width="1" height="30" fill="#111" opacity="0.35"/></g><g transform="translate(541.76,0)"><rect width="17" height="30" fill="url(#tgd)"/><path d="M2 4L15 2L16 26L3 27Z" fill="#2e2e2e"/><path d="M4 8L14 6M4 20L14 19" stroke="#5a5a5a" stroke-width="1"/><circle cx="9" cy="14" r="3.2" fill="#3a6a78"/><circle cx="9" cy="14" r="1.8" fill="#d07a2a"/><rect x="16" y="0" width="1" height="30" fill="#111" opacity="0.35"/></g><g transform="translate(558.69,0)"><rect width="17" height="30" fill="url(#tgd)"/><path d="M2 4L15 2L16 26L3 27Z" fill="#2e2e2e"/><path d="M4 8L14 6M4 20L14 19" stroke="#5a5a5a" stroke-width="1"/><circle cx="9" cy="14" r="3.2" fill="#3a6a78"/><circle cx="9" cy="14" r="1.8" fill="#d07a2a"/><rect x="16" y="0" width="1" height="30" fill="#111" opacity="0.35"/></g><g transform="translate(575.62,0)"><rect width="17" height="30" fill="url(#tgd)"/><path d="M2 4L15 2L16 26L3 27Z" fill="#2e2e2e"/><path d="M4 8L14 6M4 20L14 19" stroke="#5a5a5a" stroke-width="1"/><circle cx="9" cy="14" r="3.2" fill="#3a6a78"/><circle cx="9" cy="14" r="1.8" fill="#d07a2a"/><rect x="16" y="0" width="1" height="30" fill="#111" opacity="0.35"/></g><g transform="translate(592.55,0)"><rect width="17" height="30" fill="url(#tgd)"/><path d="M2 4L15 2L16 26L3 27Z" fill="#2e2e2e"/><path d="M4 8L14 6M4 20L14 19" stroke="#5a5a5a" stroke-width="1"/><circle cx="9" cy="14" r="3.2" fill="#3a6a78"/><circle cx="9" cy="14" r="1.8" fill="#d07a2a"/><rect x="16" y="0" width="1" height="30" fill="#111" opacity="0.35"/></g><g transform="translate(609.48,0)"><rect width="17" height="30" fill="url(#tgd)"/><path d="M2 4L15 2L16 26L3 27Z" fill="#2e2e2e"/><path d="M4 8L14 6M4 20L14 19" stroke="#5a5a5a" stroke-width="1"/><circle cx="9" cy="14" r="3.2" fill="#3a6a78"/><circle cx="9" cy="14" r="1.8" fill="#d07a2a"/><rect x="16" y="0" width="1" height="30" fill="#111" opacity="0.35"/></g><g transform="translate(626.41,0)"><rect width="17" height="30" fill="url(#tgd)"/><path d="M2 4L15 2L16 26L3 27Z" fill="#2e2e2e"/><path d="M4 8L14 6M4 20L14 19" stroke="#5a5a5a" stroke-width="1"/><circle cx="9" cy="14" r="3.2" fill="#3a6a78"/><circle cx="9" cy="14" r="1.8" fill="#d07a2a"/><rect x="16" y="0" width="1" height="30" fill="#111" opacity="0.35"/></g><g transform="translate(643.34,0)"><rect width="17" height="30" fill="url(#tgd)"/><path d="M2 4L15 2L16 26L3 27Z" fill="#2e2e2e"/><path d="M4 8L14 6M4 20L14 19" stroke="#5a5a5a" stroke-width="1"/><circle cx="9" cy="14" r="3.2" fill="#3a6a78"/><circle cx="9" cy="14" r="1.8" fill="#d07a2a"/><rect x="16" y="0" width="1" height="30" fill="#111" opacity="0.35"/></g><g transform="translate(660.27,0)"><rect width="17" height="30" fill="url(#tgd)"/><path d="M2 4L15 2L16 26L3 27Z" fill="#2e2e2e"/><path d="M4 8L14 6M4 20L14 19" stroke="#5a5a5a" stroke-width="1"/><circle cx="9" cy="14" r="3.2" fill="#3a6a78"/><circle cx="9" cy="14" r="1.8" fill="#d07a2a"/><rect x="16" y="0" width="1" height="30" fill="#111" opacity="0.35"/></g><g transform="translate(677.20,0)"><rect width="17" height="30" fill="url(#tgd)"/><path d="M2 4L15 2L16 26L3 27Z" fill="#2e2e2e"/><path d="M4 8L14 6M4 20L14 19" stroke="#5a5a5a" stroke-width="1"/><circle cx="9" cy="14" r="3.2" fill="#3a6a78"/><circle cx="9" cy="14" r="1.8" fill="#d07a2a"/><rect x="16" y="0" width="1" height="30" fill="#111" opacity="0.35"/></g><g transform="translate(694.13,0)"><rect width="17" height="30" fill="url(#tgr)"/><path d="M8 0L14 24" stroke="#1a1a1a" stroke-width="2.5"/><path d="M2 16L13 9L15 12L5 20Z" fill="#333"/><rect x="16" y="0" width="1" height="30" fill="#111" opacity="0.35"/></g><g transform="translate(711.06,0)"><rect width="17" height="30" fill="url(#tgr)"/><path d="M8 0L14 24" stroke="#1a1a1a" stroke-width="2.5"/><path d="M2 16L13 9L15 12L5 20Z" fill="#333"/><circle cx="4" cy="18" r="2.5" fill="#d08a3a"/><rect x="16" y="0" width="1" height="30" fill="#111" opacity="0.35"/></g><g transform="translate(727.99,0)"><rect width="17" height="30" fill="url(#tgr)"/><path d="M8 0L14 24" stroke="#1a1a1a" stroke-width="2.5"/><path d="M2 16L13 9L15 12L5 20Z" fill="#333"/><rect x="16" y="0" width="1" height="30" fill="#111" opacity="0.35"/></g><g transform="translate(744.92,0)"><rect width="17" height="30" fill="url(#tgr)"/><path d="M8 0L14 24" stroke="#1a1a1a" stroke-width="2.5"/><path d="M2 16L13 9L15 12L5 20Z" fill="#333"/><rect x="16" y="0" width="1" height="30" fill="#111" opacity="0.35"/></g><g transform="translate(761.85,0)"><rect width="17" height="30" fill="url(#tgr)"/><path d="M8 0L14 24" stroke="#1a1a1a" stroke-width="2.5"/><path d="M2 16L13 9L15 12L5 20Z" fill="#333"/><circle cx="4" cy="18" r="2.5" fill="#d08a3a"/><rect x="16" y="0" width="1" height="30" fill="#111" opacity="0.35"/></g><g transform="translate(778.78,0)"><rect width="17" height="30" fill="url(#tgr)"/><path d="M8 0L14 24" stroke="#1a1a1a" stroke-width="2.5"/><path d="M2 16L13 9L15 12L5 20Z" fill="#333"/><rect x="16" y="0" width="1" height="30" fill="#111" opacity="0.35"/></g><g transform="translate(795.71,0)"><rect width="17" height="30" fill="url(#tgr)"/><path d="M8 0L14 24" stroke="#1a1a1a" stroke-width="2.5"/><path d="M2 16L13 9L15 12L5 20Z" fill="#333"/><rect x="16" y="0" width="1" height="30" fill="#111" opacity="0.35"/></g><g transform="translate(812.64,0)"><rect width="17" height="30" fill="url(#tgr)"/><path d="M8 0L14 24" stroke="#1a1a1a" stroke-width="2.5"/><path d="M2 16L13 9L15 12L5 20Z" fill="#333"/><circle cx="4" cy="18" r="2.5" fill="#d08a3a"/><rect x="16" y="0" width="1" height="30" fill="#111" opacity="0.35"/></g><g transform="translate(829.57,0)"><rect width="17" height="30" fill="url(#tgr)"/><path d="M8 0L14 24" stroke="#1a1a1a" stroke-width="2.5"/><path d="M2 16L13 9L15 12L5 20Z" fill="#333"/><rect x="16" y="0" width="1" height="30" fill="#111" opacity="0.35"/></g><g transform="translate(846.50,0)"><rect width="17" height="30" fill="url(#tgr)"/><path d="M6 0L12 26" stroke="#151515" stroke-width="2.2"/><path d="M3 17L14 10L16 13L6 21Z" fill="#222"/><rect x="16" y="0" width="1" height="30" fill="#111" opacity="0.35"/></g><g transform="translate(863.43,0)"><rect width="17" height="30" fill="url(#tgr)"/><path d="M6 0L12 26" stroke="#151515" stroke-width="2.2"/><path d="M3 17L14 10L16 13L6 21Z" fill="#222"/><rect x="16" y="0" width="1" height="30" fill="#111" opacity="0.35"/></g><g transform="translate(880.36,0)"><rect width="17" height="30" fill="url(#tgr)"/><path d="M6 0L12 26" stroke="#151515" stroke-width="2.2"/><path d="M3 17L14 10L16 13L6 21Z" fill="#222"/><rect x="16" y="0" width="1" height="30" fill="#111" opacity="0.35"/></g><g transform="translate(897.29,0)"><rect width="17" height="30" fill="url(#tgr)"/><path d="M6 0L12 26" stroke="#151515" stroke-width="2.2"/><path d="M3 17L14 10L16 13L6 21Z" fill="#222"/><rect x="16" y="0" width="1" height="30" fill="#111" opacity="0.35"/></g><g transform="translate(914.22,0)"><rect width="17" height="30" fill="url(#tgr)"/><path d="M6 0L12 26" stroke="#151515" stroke-width="2.2"/><path d="M3 17L14 10L16 13L6 21Z" fill="#222"/><rect x="16" y="0" width="1" height="30" fill="#111" opacity="0.35"/></g><g transform="translate(931.15,0)"><rect width="17" height="30" fill="url(#tgr)"/><path d="M6 0L12 26" stroke="#151515" stroke-width="2.2"/><path d="M3 17L14 10L16 13L6 21Z" fill="#222"/><rect x="16" y="0" width="1" height="30" fill="#111" opacity="0.35"/></g><g transform="translate(948.08,0)"><rect width="17" height="30" fill="url(#tgr)"/><path d="M6 0L12 26" stroke="#151515" stroke-width="2.2"/><path d="M3 17L14 10L16 13L6 21Z" fill="#222"/><rect x="16" y="0" width="1" height="30" fill="#111" opacity="0.35"/></g></svg>
<div class="t" style="left:45px;top:701.13px;font-size:10px;color:#23263e;font-weight:bold;letter-spacing:0.179px;">IMG_1816.mp4</div>
<div class="a" style="left:39px;top:752px;width:968px;height:34px;border:2px solid #fff;border-radius:6px;background:#5b6bbf"></div>
<div class="a" style="left:41px;top:763px;width:964px;height:2px;background:#fff;"></div>
<svg style="left:0px;top:0px;" width="1680" height="1011" viewBox="0 0 1680 1011"><path d="M43 783H43V782.1H44.5V782.4H46.0V781.6H47.5V782.5H49.0V781.7H50.5V782.0H52.0V782.5H53.5V781.8H55.0V782.5H56.5V781.9H58.0V782.5H59.5V782.5H61.0V781.9H62.5V781.3H64.0V782.4H65.5V782.2H67.0V781.6H68.5V781.1H70.0V781.7H71.5V782.0H73.0V781.0H74.5V782.5H76.0V781.2H77.5V782.1H79.0V782.4H80.5V782.4H82.0V782.1H83.5V781.3H85.0V782.3H86.5V781.7H88.0V781.6H89.5V782.0H91.0V781.7H92.5V782.5H94.0V782.5H95.5V782.3H97.0V781.5H98.5V781.9H100.0V782.1H101.5V781.7H103.0V781.9H104.5V782.1H106.0V781.3H107.5V781.5H109.0V782.2H110.5V781.7H112.0V781.8H113.5V781.2H115.0V781.4H116.5V782.1H118.0V781.0H119.5V782.4H121.0V781.9H122.5V781.4H124.0V782.4H125.5V781.8H127.0V782.5H128.5V781.5H130.0V781.4H131.5V781.7H133.0V781.2H134.5V782.1H136.0V781.5H137.5V781.6H139.0V781.7H140.5V781.9H142.0V781.3H143.5V781.1H145.0V781.8H146.5V781.5H148.0V782.5H149.5V781.5H151.0V781.6H152.5V781.0H154.0V781.3H155.5V782.1H157.0V782.0H158.5V781.5H160.0V782.6H161.5V781.9H163.0V782.3H164.5V782.4H166.0V782.5H167.5V781.4H169.0V782.4H170.5V782.2H172.0V782.0H173.5V781.2H175.0V782.5H176.5V781.9H178.0V781.7H179.5V781.2H181.0V781.3H182.5V781.2H184.0V782.2H185.5V781.9H187.0V782.0H188.5V781.2H190.0V781.1H191.5V782.4H193.0V782.3H194.5V782.2H196.0V782.2H197.5V781.8H199.0V781.7H200.5V782.2H202.0V782.6H203.5V781.9H205.0V782.0H206.5V781.7H208.0V781.1H209.5V781.5H211.0V781.8H212.5V781.6H214.0V781.5H215.5V782.5H217.0V781.2H218.5V781.4H220.0V781.2H221.5V781.3H223.0V782.0H224.5V782.0H226.0V782.4H227.5V781.6H229.0V782.5H230.5V782.5H232.0V782.3H233.5V782.3H235.0V782.1H236.5V782.5H238.0V782.6H239.5V782.4H241.0V782.4H242.5V782.0H244.0V782.6H245.5V781.2H247.0V781.6H248.5V782.4H250.0V782.2H251.5V782.0H253.0V782.0H254.5V782.4H256.0V781.2H257.5V781.0H259.0V781.9H260.5V781.8H262.0V782.5H263.5V782.4H265.0V782.1H266.5V782.2H268.0V781.3H269.5V782.3H271.0V782.6H272.5V781.1H274.0V781.8H275.5V782.4H277.0V781.7H278.5V782.6H280.0V781.8H281.5V781.0H283.0V781.2H284.5V781.5H286.0V782.2H287.5V782.0H289.0V782.3H290.5V781.4H292.0V781.7H293.5V781.4H295.0V782.1H296.5V782.2H298.0V781.3H299.5V781.0H301.0V781.2H302.5V781.3H304.0V781.3H305.5V781.4H307.0V782.2H308.5V781.8H310.0V782.0H311.5V782.6H313.0V782.6H314.5V782.2H316.0V782.2H317.5V781.5H319.0V781.1H320.5V781.9H322.0V781.1H323.5V781.0H325.0V781.1H326.5V782.0H328.0V782.2H329.5V782.2H331.0V782.3H332.5V782.3H334.0V781.6H335.5V781.2H337.0V781.3H338.5V781.8H340.0V781.6H341.5V781.3H343.0V782.5H344.5V781.5H346.0V781.1H347.5V781.3H349.0V781.4H350.5V781.8H352.0V782.3H353.5V781.3H355.0V782.1H356.5V781.3H358.0V781.0H359.5V782.0H361.0V782.0H362.5V781.1H364.0V781.4H365.5V782.3H367.0V782.4H368.5V782.4H370.0V781.2H371.5V781.3H373.0V782.4H374.5V781.3H376.0V781.0H377.5V781.5H379.0V782.0H380.5V781.7H382.0V782.4H383.5V782.6H385.0V781.0H386.5V781.6H388.0V781.8H389.5V781.1H391.0V781.9H392.5V781.2H394.0V781.3H395.5V782.3H397.0V782.2H398.5V782.1H400.0V782.2H401.5V781.7H403.0V782.2H404.5V781.9H406.0V782.4H407.5V781.1H409.0V782.0H410.5V781.9H412.0V781.7H413.5V781.2H415.0V781.9H416.5V781.1H418.0V781.8H419.5V781.7H421.0V781.8H422.5V782.6H424.0V781.9H425.5V782.3H427.0V782.6H428.5V781.3H430.0V782.3H431.5V781.8H433.0V781.4H434.5V781.7H436.0V782.1H437.5V781.8H439.0V781.7H440.5V781.3H442.0V782.4H443.5V781.7H445.0V782.2H446.5V782.2H448.0V781.4H449.5V781.8H451.0V781.7H452.5V781.4H454.0V781.1H455.5V781.9H457.0V781.6H458.5V781.8H460.0V781.8H461.5V781.5H463.0V781.9H464.5V781.7H466.0V781.8H467.5V781.1H469.0V781.5H470.5V781.2H472.0V781.1H473.5V782.2H475.0V781.7H476.5V781.1H478.0V781.3H479.5V782.4H481.0V782.4H482.5V781.9H484.0V782.5H485.5V782.2H487.0V782.5H488.5V781.5H490.0V781.3H491.5V781.2H493.0V782.4H494.5V781.5H496.0V781.5H497.5V782.4H499.0V781.2H500.5V781.1H502.0V782.2H503.5V781.1H505.0V782.0H506.5V781.8H508.0V781.0H509.5V781.3H511.0V782.3H512.5V781.9H514.0V781.8H515.5V782.1H517.0V782.3H518.5V782.1H520.0V781.4H521.5V782.6H523.0V781.7H524.5V781.9H526.0V782.6H527.5V782.1H529.0V781.6H530.5V781.8H532.0V782.5H533.5V781.0H535.0V781.3H536.5V781.0H538.0V782.4H539.5V782.2H541.0V782.5H542.5V781.4H544.0V782.2H545.5V782.4H547.0V781.9H548.5V781.1H550.0V781.3H551.5V782.2H553.0V782.4H554.5V781.1H556.0V781.7H557.5V781.5H559.0V782.5H560.5V782.5H562.0V781.5H563.5V781.9H565.0V782.5H566.5V781.1H568.0V781.6H569.5V781.3H571.0V782.5H572.5V781.2H574.0V782.5H575.5V781.2H577.0V781.9H578.5V782.1H580.0V781.7H581.5V781.1H583.0V782.2H584.5V782.4H586.0V781.8H587.5V782.2H589.0V782.4H590.5V782.3H592.0V782.5H593.5V782.3H595.0V782.1H596.5V782.1H598.0V781.4H599.5V782.1H601.0V781.8H602.5V782.3H604.0V782.0H605.5V782.6H607.0V782.2H608.5V782.6H610.0V781.4H611.5V781.7H613.0V782.3H614.5V781.8H616.0V781.1H617.5V782.4H619.0V781.3H620.5V781.9H622.0V781.8H623.5V781.3H625.0V782.0H626.5V781.8H628.0V781.5H629.5V781.0H631.0V782.1H632.5V781.3H634.0V781.5H635.5V781.6H637.0V782.0H638.5V782.0H640.0V782.5H641.5V782.4H643.0V782.5H644.5V781.4H646.0V782.2H647.5V782.3H649.0V782.5H650.5V781.3H652.0V781.2H653.5V781.5H655.0V782.1H656.5V782.2H658.0V782.1H659.5V781.9H661.0V782.3H662.5V781.9H664.0V782.2H665.5V781.1H667.0V781.0H668.5V781.7H670.0V782.2H671.5V781.1H673.0V782.1H674.5V782.0H676.0V782.6H677.5V782.0H679.0V781.8H680.5V781.8H682.0V782.3H683.5V781.8H685.0V782.6H686.5V782.2H688.0V782.5H689.5V782.0H691.0V782.5H692.5V782.6H694.0V782.1H695.5V782.2H697.0V781.7H698.5V781.8H700.0V781.4H701.5V781.5H703.0V781.5H704.5V781.2H706.0V782.0H707.5V782.1H709.0V781.0H710.5V782.4H712.0V781.4H713.5V781.6H715.0V782.5H716.5V781.3H718.0V781.2H719.5V781.6H721.0V781.4H722.5V781.3H724.0V782.4H725.5V781.8H727.0V781.8H728.5V781.3H730.0V781.3H731.5V781.3H733.0V781.7H734.5V781.2H736.0V781.5H737.5V781.5H739.0V782.2H740.5V782.6H742.0V782.4H743.5V782.0H745.0V782.4H746.5V781.3H748.0V781.7H749.5V781.6H751.0V781.6H752.5V781.5H754.0V781.8H755.5V782.6H757.0V781.3H758.5V781.4H760.0V781.8H761.5V781.7H763.0V781.5H764.5V782.5H766.0V781.4H767.5V782.2H769.0V782.5H770.5V782.2H772.0V781.4H773.5V782.3H775.0V781.4H776.5V781.0H778.0V781.8H779.5V782.0H781.0V781.8H782.5V781.5H784.0V781.4H785.5V781.6H787.0V781.6H788.5V782.5H790.0V782.4H791.5V782.2H793.0V781.4H794.5V782.1H796.0V781.7H797.5V782.6H799.0V782.5H800.5V782.2H802.0V781.5H803.5V781.5H805.0V781.5H806.5V782.1H808.0V781.8H809.5V781.9H811.0V781.9H812.5V782.4H814.0V781.2H815.5V782.3H817.0V781.0H818.5V781.1H820.0V782.6H821.5V781.9H823.0V781.3H824.5V781.1H826.0V781.9H827.5V782.2H829.0V782.3H830.5V781.1H832.0V782.3H833.5V781.7H835.0V782.4H836.5V781.8H838.0V781.1H839.5V782.4H841.0V781.3H842.5V781.8H844.0V781.2H845.5V781.5H847.0V782.2H848.5V781.2H850.0V781.8H851.5V782.6H853.0V782.6H854.5V781.8H856.0V781.9H857.5V782.1H859.0V782.4H860.5V782.0H862.0V782.1H863.5V781.3H865.0V782.6H866.5V781.4H868.0V781.3H869.5V782.4H871.0V781.1H872.5V781.5H874.0V781.2H875.5V782.1H877.0V782.0H878.5V782.0H880.0V781.0H881.5V781.7H883.0V782.0H884.5V781.9H886.0V782.2H887.5V782.5H889.0V782.4H890.5V781.3H892.0V782.1H893.5V781.1H895.0V782.2H896.5V782.2H898.0V781.8H899.5V782.3H901.0V782.0H902.5V781.1H904.0V781.2H905.5V781.3H907.0V781.6H908.5V781.1H910.0V781.1H911.5V781.7H913.0V781.4H914.5V782.5H916.0V781.4H917.5V781.9H919.0V781.4H920.5V781.6H922.0V782.1H923.5V782.5H925.0V781.1H926.5V782.4H928.0V781.8H929.5V782.1H931.0V782.1H932.5V781.4H934.0V781.0H935.5V782.2H937.0V781.6H938.5V782.1H940.0V781.7H941.5V782.0H943.0V782.3H944.5V782.3H946.0V782.3H947.5V781.2H949.0V781.8H950.5V782.2H952.0V781.1H953.5V781.0H955.0V781.9H956.5V782.4H958.0V782.3H959.5V782.5H961.0V782.1H962.5V782.5H964.0V782.2H965.5V782.2H967.0V781.7H968.5V781.2H970.0V781.4H971.5V781.9H973.0V781.9H974.5V781.8H976.0V782.0H977.5V782.1H979.0V782.5H980.5V782.2H982.0V781.1H983.5V782.4H985.0V781.8H986.5V781.6H988.0V781.2H989.5V782.3H991.0V782.2H992.5V782.2H994.0V782.0H995.5V781.9H997.0V781.1H998.5V781.2H1000.0V781.2H1001.5V782.6H1003.0V782.5H1004V783Z" fill="#2e3a80"/><g fill="#2e3a80"><rect x="43" y="772" width="1" height="11"/><rect x="371" y="772" width="1" height="11"/><rect x="352" y="777" width="1" height="6"/><rect x="356" y="778" width="1" height="5"/><rect x="360" y="776" width="1" height="7"/></g></svg>
<svg style="left:0px;top:0px;" width="1680" height="1011" viewBox="0 0 1680 1011"><circle cx="39" cy="764" r="4" fill="#262626" stroke="#fff" stroke-width="2"/><circle cx="1007" cy="764" r="4" fill="#262626" stroke="#fff" stroke-width="2"/></svg>
<div class="a" style="left:39px;top:789px;width:968px;height:55px;border:1.5px solid #4ac0aa;border-radius:8px;background:#35ac98;overflow:hidden"><div class="a" style="left:1px;top:22px;width:963px;height:30px;background:#3a8f80;border-radius:6px"></div></div>
<div class="t" style="left:45px;top:795.03px;font-size:10px;color:#1c3934;font-weight:bold;letter-spacing:0.284px;">Casiio x Sleepermane - Luna_(audiodevil.ru).mp3</div>
<svg style="left:0px;top:0px;" width="1680" height="1011" viewBox="0 0 1680 1011"><path d="M66 841H66V838.1H67.5V837.8H69.0V836.7H70.5V838.1H72.0V838.0H73.5V837.7H75.0V838.9H76.5V838.0H78.0V837.6H79.5V837.1H81.0V839.2H82.5V838.6H84.0V839.2H85.5V837.1H87.0V837.4H88.5V839.4H90.0V836.6H91.5V836.6H93.0V837.5H94.5V837.7H96.0V839.0H97.5V839.5H99.0V837.9H100.5V839.3H102.0V838.9H103.5V838.8H105.0V839.4H106.5V838.1H108.0V838.2H109.5V837.0H111.0V837.9H112.5V837.6H114.0V838.0H115.5V837.5H117.0V838.1H118.5V838.7H120.0V836.5H121.5V836.5H123.0V837.0H124.5V837.4H126.0V838.6H127.5V838.8H129.0V838.6H130.5V839.3H132.0V837.2H133.5V838.3H135.0V837.0H136.5V838.3H138.0V836.6H139.5V837.0H141.0V839.5H142.5V838.9H144.0V836.8H145.5V838.1H147.0V836.6H148.5V838.3H150.0V839.3H151.5V837.6H153.0V837.2H154.5V838.7H156.0V839.2H157.5V838.5H159.0V836.6H160.5V837.2H162.0V839.1H163.5V838.8H165.0V839.2H166.5V839.3H168.0V837.1H169.5V839.0H171.0V837.8H172.5V838.2H174.0V838.9H175.5V837.3H177.0V839.1H178.5V837.6H180.0V839.2H181.5V838.2H183.0V838.9H184.5V838.7H186.0V836.6H187.5V837.1H189.0V838.6H190.5V836.8H192.0V838.9H193.5V838.3H195.0V836.9H196.5V837.6H198.0V839.2H199.5V836.5H201.0V838.9H202.5V838.7H204.0V837.2H205.5V838.5H207.0V838.6H208.5V839.3H210.0V839.2H211.5V837.8H213.0V838.8H214.5V837.7H216.0V838.4H217.5V838.1H219.0V836.6H220.5V838.0H222.0V837.8H223.5V836.9H225.0V839.0H226.5V839.0H228.0V836.8H229.5V837.0H231.0V838.8H232.5V838.9H234.0V837.3H235.5V834.2H237.0V837.2H238.5V834.2H240.0V834.5H241.5V835.6H243.0V836.3H244.5V837.6H246.0V837.8H247.5V834.1H249.0V837.0H250.5V835.2H252.0V837.0H253.5V834.7H255.0V835.6H256.5V836.8H258.0V837.3H259.5V835.1H261.0V837.7H262.5V837.1H264.0V835.8H265.5V834.6H267.0V835.5H268.5V836.9H270.0V834.3H271.5V837.2H273.0V837.9H274.5V836.9H276.0V836.2H277.5V837.8H279.0V837.3H280.5V836.5H282.0V835.7H283.5V837.5H285.0V836.6H286.5V834.4H288.0V834.1H289.5V835.4H291.0V835.2H292.5V835.7H294.0V837.4H295.5V837.9H297.0V837.9H298.5V834.4H300.0V835.2H301.5V834.1H303.0V837.9H304.5V835.5H306.0V836.1H307.5V835.1H309.0V836.7H310.5V834.0H312.0V837.7H313.5V835.8H315.0V835.1H316.5V834.4H318.0V835.1H319.5V835.2H321.0V834.8H322.5V834.3H324.0V836.6H325.5V835.3H327.0V834.4H328.5V834.5H330.0V836.3H331.5V834.8H333.0V834.5H334.5V835.7H336.0V835.5H337.5V836.5H339.0V835.7H340.5V835.6H342.0V837.7H343.5V835.4H345.0V834.0H346.5V834.5H348.0V835.1H349.5V836.4H351.0V835.1H352.5V835.7H354.0V836.2H355.5V834.6H357.0V837.7H358.5V835.0H360.0V837.9H361.5V835.6H363.0V836.1H364.5V837.1H366.0V835.2H367.5V836.0H369.0V835.5H370.5V834.3H372.0V837.0H373.5V838.0H375.0V836.8H376.5V835.3H378.0V837.2H379.5V837.3H381.0V834.4H382.5V835.4H384.0V836.2H385.5V834.4H387.0V836.7H388.5V835.3H390.0V837.2H391.5V836.3H393.0V834.8H394.5V834.3H396.0V834.5H397.5V836.5H399.0V835.7H400.5V836.7H402.0V837.5H403.5V836.0H405.0V834.7H406.5V834.6H408.0V835.2H409.5V834.2H411.0V836.9H412.5V837.3H414.0V836.2H415.5V836.9H417.0V837.1H418.5V836.3H420.0V835.5H421.5V836.0H423.0V836.7H424.5V834.6H426.0V834.1H427.5V836.2H429.0V837.7H430.5V837.9H432.0V834.5H433.5V837.8H435.0V835.2H436.5V835.7H438.0V836.8H439.5V834.8H441.0V837.9H442.5V837.5H444.0V836.2H445.5V837.9H447.0V834.7H448.5V837.1H450.0V837.4H451.5V837.8H453.0V835.5H454.5V836.2H456.0V835.5H457.5V835.4H459.0V834.8H460.5V834.2H462.0V835.3H463.5V837.2H465.0V836.1H466.5V837.3H468.0V838.0H469.5V836.1H471.0V835.1H472.5V837.3H474.0V836.9H475.5V836.6H477.0V835.2H478.5V835.9H480.0V835.5H481.5V835.0H483.0V836.4H484.5V834.8H486.0V834.4H487.5V837.7H489.0V834.3H490.5V835.1H492.0V837.5H493.5V836.2H495.0V835.5H496.5V834.4H498.0V836.5H499.5V835.7H501.0V834.5H502.5V834.8H504.0V834.2H505.5V836.1H507.0V835.4H508.5V837.2H510.0V835.1H511.5V834.7H513.0V835.4H514.5V835.1H516.0V837.1H517.5V834.4H519.0V834.1H520.5V834.1H522.0V835.9H523.5V834.8H525.0V836.7H526.5V834.4H528.0V834.6H529.5V836.6H531.0V837.7H532.5V836.2H534.0V835.8H535.5V834.9H537.0V836.1H538.5V837.9H540.0V834.8H541.5V837.7H543.0V834.8H544.5V837.3H546.0V836.7H547.5V834.8H549.0V837.4H550.5V837.4H552.0V835.9H553.5V835.1H555.0V834.6H556.5V835.2H558.0V834.2H559.5V836.0H561.0V834.2H562.5V837.7H564.0V837.1H565.5V835.9H567.0V836.8H568.5V835.1H570.0V835.4H571.5V835.9H573.0V834.6H574.5V835.8H576.0V836.8H577.5V836.5H579.0V834.6H580.5V834.4H582.0V837.2H583.5V834.6H585.0V834.1H586.5V835.9H588.0V835.7H589.5V837.2H591.0V835.9H592.5V836.0H594.0V835.6H595.5V837.9H597.0V834.1H598.5V835.9H600.0V836.4H601.5V834.8H603.0V835.7H604.5V836.0H606.0V835.2H607.5V837.7H609.0V835.8H610.5V836.3H612.0V834.2H613.5V834.3H615.0V836.9H616.5V836.1H618.0V837.5H619.5V836.3H621.0V834.7H622.5V834.4H624.0V836.1H625.5V836.7H627.0V837.2H628.5V835.5H630.0V834.3H631.5V837.5H633.0V834.9H634.5V837.9H636.0V837.2H637.5V837.1H639.0V835.3H640.5V836.7H642.0V836.6H643.5V835.5H645.0V837.6H646.5V835.1H648.0V837.5H649.5V836.0H651.0V837.0H652.5V837.2H654.0V835.9H655.5V836.3H657.0V836.5H658.5V836.3H660.0V835.9H661.5V837.4H663.0V837.2H664.5V835.5H666.0V835.4H667.5V835.9H669.0V834.6H670.5V835.6H672.0V834.6H673.5V837.1H675.0V835.0H676.5V834.8H678.0V834.4H679.5V836.7H681.0V836.7H682.5V834.3H684.0V837.1H685.5V834.0H687.0V834.4H688.5V837.5H690.0V837.0H691.5V835.1H693.0V837.0H694.5V837.6H696.0V834.7H697.5V836.3H699.0V834.8H700.5V837.5H702.0V836.4H703.5V835.3H705.0V837.9H706.5V837.2H708.0V835.3H709.5V834.4H711.0V834.1H712.5V837.5H714.0V836.0H715.5V835.0H717.0V836.0H718.5V835.3H720.0V837.2H721.5V837.7H723.0V837.6H724.5V837.9H726.0V835.8H727.5V835.9H729.0V835.7H730.5V837.4H732.0V837.3H733.5V837.2H735.0V834.6H736.5V834.0H738.0V834.3H739.5V837.6H741.0V837.8H742.5V834.2H744.0V836.2H745.5V834.9H747.0V836.7H748.5V836.1H750.0V835.9H751.5V836.3H753.0V835.6H754.5V837.9H756.0V835.2H757.5V834.6H759.0V837.3H760.5V836.2H762.0V835.0H763.5V836.4H765.0V837.2H766.5V837.3H768.0V835.9H769.5V837.9H771.0V834.4H772.5V834.8H774.0V835.2H775.5V834.6H777.0V835.5H778.5V836.4H780.0V835.6H781.5V836.0H783.0V834.1H784.5V834.8H786.0V837.0H787.5V834.4H789.0V835.0H790.5V834.9H792.0V834.7H793.5V836.4H795.0V834.4H796.5V834.5H798.0V835.2H799.5V834.9H801.0V834.9H802.5V836.4H804.0V835.1H805.5V837.7H807.0V836.6H808.5V836.1H810.0V838.0H811.5V836.6H813.0V835.4H814.5V835.5H816.0V837.1H817.5V834.2H819.0V835.3H820.5V836.6H822.0V835.4H823.5V835.7H825.0V835.9H826.5V836.4H828.0V834.0H829.5V835.4H831.0V835.2H832.5V835.0H834.0V834.1H835.5V837.9H837.0V835.5H838.5V835.0H840.0V837.0H841.5V836.4H843.0V837.8H844.5V837.2H846.0V836.5H847.5V837.6H849.0V837.0H850.5V834.4H852.0V835.8H853.5V836.0H855.0V834.1H856.5V835.7H858.0V834.0H859.5V835.4H861.0V834.8H862.5V837.7H864.0V835.6H865.5V835.0H867.0V837.8H868.5V834.3H870.0V837.4H871.5V836.1H873.0V837.3H874.5V836.0H876.0V835.6H877.5V837.8H879.0V834.2H880.5V836.3H882.0V835.9H883.5V835.6H885.0V836.5H886.5V836.9H888.0V835.4H889.5V835.8H891.0V836.9H892.5V835.1H894.0V836.8H895.5V837.9H897.0V837.0H898.5V837.8H900.0V837.4H901.5V835.0H903.0V836.4H904.5V834.4H906.0V835.0H907.5V837.8H909.0V834.0H910.5V834.2H912.0V837.7H913.5V834.4H915.0V836.3H916.5V836.1H918.0V834.1H919.5V837.0H921.0V835.9H922.5V834.3H924.0V835.1H925.5V836.1H927.0V834.1H928.5V834.7H930.0V835.6H931.5V837.5H933.0V835.5H934.5V836.2H936.0V837.2H937.5V837.8H939.0V835.9H940.5V837.5H942.0V836.2H943.5V835.3H945.0V836.2H946.5V837.0H948.0V835.7H949.5V836.3H951.0V834.9H952.5V835.9H954.0V834.0H955.5V834.2H957.0V835.1H958.5V837.0H960.0V837.5H961.5V834.4H963.0V834.9H964.5V835.5H966.0V836.6H967.5V836.9H969.0V835.3H970.5V835.7H972.0V835.6H973.5V835.5H975.0V835.0H976.5V837.2H978.0V837.0H979.5V834.1H981.0V834.3H982.5V834.5H984.0V837.8H985.5V837.8H987.0V836.9H988.5V836.3H990.0V835.5H991.5V837.6H993.0V835.8H994.5V837.7H996.0V837.7H997.5V835.3H999.0V835.8H1000.5V835.5H1002.0V836.5H1003.5V836.1H1004V841Z" fill="#1f564a"/><g fill="#1f564a"><rect x="235.0" y="825.1" width="1" height="15.9"/><rect x="236.0" y="832.2" width="1" height="8.8"/><rect x="242.0" y="826.1" width="1" height="14.9"/><rect x="243.0" y="832.8" width="1" height="8.2"/><rect x="248.0" y="821.7" width="1" height="19.3"/><rect x="249.0" y="830.4" width="1" height="10.6"/><rect x="260.0" y="817.2" width="1" height="23.8"/><rect x="261.0" y="827.9" width="1" height="13.1"/><rect x="268.0" y="824.4" width="1" height="16.6"/><rect x="269.0" y="831.9" width="1" height="9.1"/><rect x="271.5" y="831.8" width="1" height="9.2"/><rect x="274.5" y="814.2" width="1" height="26.8"/><rect x="275.5" y="826.2" width="1" height="14.8"/><rect x="278.5" y="830.9" width="1" height="10.1"/><rect x="281.5" y="816.4" width="1" height="24.6"/><rect x="282.5" y="827.5" width="1" height="13.5"/><rect x="288.0" y="822.8" width="1" height="18.2"/><rect x="289.0" y="831.0" width="1" height="10.0"/><rect x="294.0" y="823.5" width="1" height="17.5"/><rect x="295.0" y="831.4" width="1" height="9.6"/><rect x="303.0" y="832.5" width="1" height="8.5"/><rect x="306.0" y="821.2" width="1" height="19.8"/><rect x="307.0" y="830.1" width="1" height="10.9"/><rect x="320.0" y="816.5" width="1" height="24.5"/><rect x="321.0" y="827.5" width="1" height="13.5"/><rect x="323.0" y="835.3" width="1" height="5.7"/><rect x="326.0" y="818.7" width="1" height="22.3"/><rect x="327.0" y="828.8" width="1" height="12.2"/><rect x="332.0" y="821.1" width="1" height="19.9"/><rect x="333.0" y="830.0" width="1" height="11.0"/><rect x="343.0" y="829.9" width="1" height="11.1"/><rect x="346.0" y="824.9" width="1" height="16.1"/><rect x="347.0" y="832.2" width="1" height="8.8"/><rect x="360.0" y="822.9" width="1" height="18.1"/><rect x="361.0" y="831.0" width="1" height="10.0"/><rect x="363.0" y="833.5" width="1" height="7.5"/><rect x="366.0" y="819.7" width="1" height="21.3"/><rect x="367.0" y="829.3" width="1" height="11.7"/><rect x="380.0" y="821.9" width="1" height="19.1"/><rect x="381.0" y="830.5" width="1" height="10.5"/><rect x="387.0" y="824.9" width="1" height="16.1"/><rect x="388.0" y="832.1" width="1" height="8.9"/><rect x="401.0" y="824.5" width="1" height="16.5"/><rect x="402.0" y="831.9" width="1" height="9.1"/><rect x="408.0" y="827.7" width="1" height="13.3"/><rect x="409.0" y="833.7" width="1" height="7.3"/><rect x="419.0" y="833.9" width="1" height="7.1"/><rect x="422.0" y="825.3" width="1" height="15.7"/><rect x="423.0" y="832.3" width="1" height="8.7"/><rect x="431.0" y="833.9" width="1" height="7.1"/><rect x="434.0" y="825.8" width="1" height="15.2"/><rect x="435.0" y="832.7" width="1" height="8.3"/><rect x="446.0" y="825.5" width="1" height="15.5"/><rect x="447.0" y="832.5" width="1" height="8.5"/><rect x="454.0" y="824.1" width="1" height="16.9"/><rect x="455.0" y="831.7" width="1" height="9.3"/><rect x="457.0" y="836.5" width="1" height="4.5"/><rect x="460.0" y="825.8" width="1" height="15.2"/><rect x="461.0" y="832.6" width="1" height="8.4"/><rect x="467.0" y="818.9" width="1" height="22.1"/><rect x="468.0" y="828.8" width="1" height="12.2"/><rect x="472.0" y="832.6" width="1" height="8.4"/><rect x="475.0" y="817.0" width="1" height="24.0"/><rect x="476.0" y="827.8" width="1" height="13.2"/><rect x="478.0" y="834.8" width="1" height="6.2"/><rect x="481.0" y="826.5" width="1" height="14.5"/><rect x="482.0" y="833.0" width="1" height="8.0"/><rect x="485.0" y="831.9" width="1" height="9.1"/><rect x="488.0" y="826.0" width="1" height="15.0"/><rect x="489.0" y="832.7" width="1" height="8.3"/><rect x="502.0" y="822.1" width="1" height="18.9"/><rect x="503.0" y="830.6" width="1" height="10.4"/><rect x="513.0" y="830.9" width="1" height="10.1"/><rect x="516.0" y="820.7" width="1" height="20.3"/><rect x="517.0" y="829.8" width="1" height="11.2"/><rect x="521.0" y="834.3" width="1" height="6.7"/><rect x="524.0" y="814.4" width="1" height="26.6"/><rect x="525.0" y="826.4" width="1" height="14.6"/><rect x="535.0" y="833.1" width="1" height="7.9"/><rect x="538.0" y="816.7" width="1" height="24.3"/><rect x="539.0" y="827.7" width="1" height="13.3"/><rect x="544.0" y="815.2" width="1" height="25.8"/><rect x="545.0" y="826.8" width="1" height="14.2"/><rect x="552.0" y="814.2" width="1" height="26.8"/><rect x="553.0" y="826.3" width="1" height="14.7"/><rect x="559.0" y="816.7" width="1" height="24.3"/><rect x="560.0" y="827.6" width="1" height="13.4"/><rect x="565.0" y="814.6" width="1" height="26.4"/><rect x="566.0" y="826.5" width="1" height="14.5"/><rect x="576.0" y="834.1" width="1" height="6.9"/><rect x="579.0" y="827.9" width="1" height="13.1"/><rect x="580.0" y="833.8" width="1" height="7.2"/><rect x="585.0" y="822.1" width="1" height="18.9"/><rect x="586.0" y="830.6" width="1" height="10.4"/><rect x="588.5" y="835.7" width="1" height="5.3"/><rect x="591.5" y="819.1" width="1" height="21.9"/><rect x="592.5" y="829.0" width="1" height="12.0"/><rect x="602.5" y="835.4" width="1" height="5.6"/><rect x="605.5" y="822.1" width="1" height="18.9"/><rect x="606.5" y="830.6" width="1" height="10.4"/><rect x="609.5" y="829.9" width="1" height="11.1"/><rect x="612.5" y="821.4" width="1" height="19.6"/><rect x="613.5" y="830.2" width="1" height="10.8"/><rect x="623.5" y="831.8" width="1" height="9.2"/><rect x="626.5" y="817.1" width="1" height="23.9"/><rect x="627.5" y="827.9" width="1" height="13.1"/><rect x="633.0" y="817.5" width="1" height="23.5"/><rect x="634.0" y="828.1" width="1" height="12.9"/><rect x="639.0" y="815.3" width="1" height="25.7"/><rect x="640.0" y="826.8" width="1" height="14.2"/><rect x="642.0" y="835.4" width="1" height="5.6"/><rect x="645.0" y="823.0" width="1" height="18.0"/><rect x="646.0" y="831.1" width="1" height="9.9"/><rect x="654.0" y="831.3" width="1" height="9.7"/><rect x="657.0" y="819.7" width="1" height="21.3"/><rect x="658.0" y="829.3" width="1" height="11.7"/><rect x="663.5" y="815.5" width="1" height="25.5"/><rect x="664.5" y="827.0" width="1" height="14.0"/><rect x="668.5" y="830.9" width="1" height="10.1"/><rect x="671.5" y="823.6" width="1" height="17.4"/><rect x="672.5" y="831.4" width="1" height="9.6"/><rect x="683.5" y="820.3" width="1" height="20.7"/><rect x="684.5" y="829.6" width="1" height="11.4"/><rect x="690.5" y="822.4" width="1" height="18.6"/><rect x="691.5" y="830.7" width="1" height="10.3"/><rect x="697.5" y="817.2" width="1" height="23.8"/><rect x="698.5" y="827.9" width="1" height="13.1"/><rect x="703.5" y="824.9" width="1" height="16.1"/><rect x="704.5" y="832.1" width="1" height="8.9"/><rect x="706.5" y="835.9" width="1" height="5.1"/><rect x="709.5" y="816.8" width="1" height="24.2"/><rect x="710.5" y="827.7" width="1" height="13.3"/><rect x="721.5" y="817.2" width="1" height="23.8"/><rect x="722.5" y="827.9" width="1" height="13.1"/><rect x="727.5" y="824.7" width="1" height="16.3"/><rect x="728.5" y="832.0" width="1" height="9.0"/><rect x="733.5" y="815.3" width="1" height="25.7"/><rect x="734.5" y="826.9" width="1" height="14.1"/><rect x="741.5" y="818.0" width="1" height="23.0"/><rect x="742.5" y="828.4" width="1" height="12.6"/><rect x="753.5" y="822.2" width="1" height="18.8"/><rect x="754.5" y="830.6" width="1" height="10.4"/><rect x="757.5" y="829.7" width="1" height="11.3"/><rect x="760.5" y="816.7" width="1" height="24.3"/><rect x="761.5" y="827.6" width="1" height="13.4"/><rect x="767.0" y="814.1" width="1" height="26.9"/><rect x="768.0" y="826.2" width="1" height="14.8"/><rect x="774.0" y="827.3" width="1" height="13.7"/><rect x="775.0" y="833.4" width="1" height="7.6"/><rect x="786.0" y="828.0" width="1" height="13.0"/><rect x="787.0" y="833.8" width="1" height="7.2"/><rect x="792.5" y="826.8" width="1" height="14.2"/><rect x="793.5" y="833.2" width="1" height="7.8"/><rect x="799.5" y="820.6" width="1" height="20.4"/><rect x="800.5" y="829.8" width="1" height="11.2"/><rect x="807.5" y="826.8" width="1" height="14.2"/><rect x="808.5" y="833.2" width="1" height="7.8"/><rect x="821.5" y="816.0" width="1" height="25.0"/><rect x="822.5" y="827.2" width="1" height="13.8"/><rect x="825.5" y="835.5" width="1" height="5.5"/><rect x="828.5" y="825.3" width="1" height="15.7"/><rect x="829.5" y="832.4" width="1" height="8.6"/><rect x="839.5" y="830.4" width="1" height="10.6"/><rect x="842.5" y="825.1" width="1" height="15.9"/><rect x="843.5" y="832.2" width="1" height="8.8"/><rect x="854.5" y="821.1" width="1" height="19.9"/><rect x="855.5" y="830.0" width="1" height="11.0"/><rect x="858.5" y="833.8" width="1" height="7.2"/><rect x="861.5" y="820.2" width="1" height="20.8"/><rect x="862.5" y="829.6" width="1" height="11.4"/><rect x="869.5" y="827.1" width="1" height="13.9"/><rect x="870.5" y="833.3" width="1" height="7.7"/><rect x="875.5" y="826.5" width="1" height="14.5"/><rect x="876.5" y="833.0" width="1" height="8.0"/><rect x="883.5" y="817.5" width="1" height="23.5"/><rect x="884.5" y="828.1" width="1" height="12.9"/><rect x="889.5" y="827.8" width="1" height="13.2"/><rect x="890.5" y="833.8" width="1" height="7.2"/><rect x="897.5" y="821.3" width="1" height="19.7"/><rect x="898.5" y="830.2" width="1" height="10.8"/><rect x="904.5" y="821.6" width="1" height="19.4"/><rect x="905.5" y="830.3" width="1" height="10.7"/><rect x="910.5" y="816.2" width="1" height="24.8"/><rect x="911.5" y="827.3" width="1" height="13.7"/><rect x="921.5" y="832.1" width="1" height="8.9"/><rect x="924.5" y="823.9" width="1" height="17.1"/><rect x="925.5" y="831.6" width="1" height="9.4"/><rect x="932.5" y="817.5" width="1" height="23.5"/><rect x="933.5" y="828.1" width="1" height="12.9"/><rect x="939.5" y="820.2" width="1" height="20.8"/><rect x="940.5" y="829.6" width="1" height="11.4"/><rect x="942.5" y="835.4" width="1" height="5.6"/><rect x="945.5" y="817.8" width="1" height="23.2"/><rect x="946.5" y="828.2" width="1" height="12.8"/><rect x="949.5" y="834.8" width="1" height="6.2"/><rect x="952.5" y="821.4" width="1" height="19.6"/><rect x="953.5" y="830.2" width="1" height="10.8"/><rect x="963.5" y="830.4" width="1" height="10.6"/><rect x="966.5" y="826.7" width="1" height="14.3"/><rect x="967.5" y="833.1" width="1" height="7.9"/><rect x="973.0" y="826.2" width="1" height="14.8"/><rect x="974.0" y="832.8" width="1" height="8.2"/><rect x="987.0" y="825.5" width="1" height="15.5"/><rect x="988.0" y="832.5" width="1" height="8.5"/><rect x="992.0" y="833.3" width="1" height="7.7"/><rect x="995.0" y="818.1" width="1" height="22.9"/><rect x="996.0" y="828.4" width="1" height="12.6"/><rect x="998.0" y="835.7" width="1" height="5.3"/><rect x="1001.0" y="826.3" width="1" height="14.7"/><rect x="1002.0" y="832.9" width="1" height="8.1"/></g></svg>
<svg style="left:0px;top:0px;" width="1680" height="1011" viewBox="0 0 1680 1011"><g fill="#3a3a3a"><rect x="1645" y="640.5" width="8" height="3" rx="1.5"/><rect x="1661" y="640.5" width="8" height="3" rx="1.5"/><rect x="1645" y="651.4" width="8" height="3" rx="1.5"/><rect x="1661" y="651.4" width="8" height="3" rx="1.5"/><rect x="1645" y="656.4" width="8" height="3" rx="1.5"/><rect x="1661" y="656.4" width="8" height="3" rx="1.5"/><rect x="1645" y="661.4" width="8" height="3" rx="1.5"/><rect x="1661" y="661.4" width="8" height="3" rx="1.5"/><rect x="1645" y="666.4" width="8" height="3" rx="1.5"/><rect x="1661" y="666.4" width="8" height="3" rx="1.5"/><rect x="1645" y="671.4" width="8" height="3" rx="1.5"/><rect x="1661" y="671.4" width="8" height="3" rx="1.5"/><rect x="1645" y="676.4" width="8" height="3" rx="1.5"/><rect x="1661" y="676.4" width="8" height="3" rx="1.5"/><rect x="1645" y="681.4" width="8" height="3" rx="1.5"/><rect x="1661" y="681.4" width="8" height="3" rx="1.5"/><rect x="1645" y="686.4" width="8" height="3" rx="1.5"/><rect x="1661" y="686.4" width="8" height="3" rx="1.5"/><rect x="1645" y="691.4" width="8" height="3" rx="1.5"/><rect x="1661" y="691.4" width="8" height="3" rx="1.5"/><rect x="1645" y="696.4" width="8" height="3" rx="1.5"/><rect x="1661" y="696.4" width="8" height="3" rx="1.5"/><rect x="1645" y="701.4" width="8" height="3" rx="1.5"/><rect x="1661" y="701.4" width="8" height="3" rx="1.5"/><rect x="1645" y="706.4" width="8" height="3" rx="1.5"/><rect x="1661" y="706.4" width="8" height="3" rx="1.5"/><rect x="1645" y="711.4" width="8" height="3" rx="1.5"/><rect x="1661" y="711.4" width="8" height="3" rx="1.5"/><rect x="1645" y="716.4" width="8" height="3" rx="1.5"/><rect x="1661" y="716.4" width="8" height="3" rx="1.5"/><rect x="1645" y="721.4" width="8" height="3" rx="1.5"/><rect x="1661" y="721.4" width="8" height="3" rx="1.5"/><rect x="1645" y="726.4" width="8" height="3" rx="1.5"/><rect x="1661" y="726.4" width="8" height="3" rx="1.5"/><rect x="1645" y="731.4" width="8" height="3" rx="1.5"/><rect x="1661" y="731.4" width="8" height="3" rx="1.5"/><rect x="1645" y="736.4" width="8" height="3" rx="1.5"/><rect x="1661" y="736.4" width="8" height="3" rx="1.5"/><rect x="1645" y="741.4" width="8" height="3" rx="1.5"/><rect x="1661" y="741.4" width="8" height="3" rx="1.5"/><rect x="1645" y="746.4" width="8" height="3" rx="1.5"/><rect x="1661" y="746.4" width="8" height="3" rx="1.5"/><rect x="1645" y="751.4" width="8" height="3" rx="1.5"/><rect x="1661" y="751.4" width="8" height="3" rx="1.5"/><rect x="1645" y="756.4" width="8" height="3" rx="1.5"/><rect x="1661" y="756.4" width="8" height="3" rx="1.5"/><rect x="1645" y="761.4" width="8" height="3" rx="1.5"/><rect x="1661" y="761.4" width="8" height="3" rx="1.5"/><rect x="1645" y="766.4" width="8" height="3" rx="1.5"/><rect x="1661" y="766.4" width="8" height="3" rx="1.5"/><rect x="1645" y="771.4" width="8" height="3" rx="1.5"/><rect x="1661" y="771.4" width="8" height="3" rx="1.5"/><rect x="1645" y="776.4" width="8" height="3" rx="1.5"/><rect x="1661" y="776.4" width="8" height="3" rx="1.5"/><rect x="1645" y="781.4" width="8" height="3" rx="1.5"/><rect x="1661" y="781.4" width="8" height="3" rx="1.5"/><rect x="1645" y="786.4" width="8" height="3" rx="1.5"/><rect x="1661" y="786.4" width="8" height="3" rx="1.5"/><rect x="1645" y="791.4" width="8" height="3" rx="1.5"/><rect x="1661" y="791.4" width="8" height="3" rx="1.5"/><rect x="1645" y="796.4" width="8" height="3" rx="1.5"/><rect x="1661" y="796.4" width="8" height="3" rx="1.5"/><rect x="1645" y="801.4" width="8" height="3" rx="1.5"/><rect x="1661" y="801.4" width="8" height="3" rx="1.5"/><rect x="1645" y="806.4" width="8" height="3" rx="1.5"/><rect x="1661" y="806.4" width="8" height="3" rx="1.5"/><rect x="1645" y="811.4" width="8" height="3" rx="1.5"/><rect x="1661" y="811.4" width="8" height="3" rx="1.5"/><rect x="1645" y="816.4" width="8" height="3" rx="1.5"/><rect x="1661" y="816.4" width="8" height="3" rx="1.5"/><rect x="1645" y="821.4" width="8" height="3" rx="1.5"/><rect x="1661" y="821.4" width="8" height="3" rx="1.5"/><rect x="1645" y="826.4" width="8" height="3" rx="1.5"/><rect x="1661" y="826.4" width="8" height="3" rx="1.5"/><rect x="1645" y="831.4" width="8" height="3" rx="1.5"/><rect x="1661" y="831.4" width="8" height="3" rx="1.5"/><rect x="1645" y="836.4" width="8" height="3" rx="1.5"/><rect x="1661" y="836.4" width="8" height="3" rx="1.5"/><rect x="1645" y="841.4" width="8" height="3" rx="1.5"/><rect x="1661" y="841.4" width="8" height="3" rx="1.5"/><rect x="1645" y="846.4" width="8" height="3" rx="1.5"/><rect x="1661" y="846.4" width="8" height="3" rx="1.5"/><rect x="1645" y="851.4" width="8" height="3" rx="1.5"/><rect x="1661" y="851.4" width="8" height="3" rx="1.5"/><rect x="1645" y="856.4" width="8" height="3" rx="1.5"/><rect x="1661" y="856.4" width="8" height="3" rx="1.5"/><rect x="1645" y="861.4" width="8" height="3" rx="1.5"/><rect x="1661" y="861.4" width="8" height="3" rx="1.5"/><rect x="1645" y="866.4" width="8" height="3" rx="1.5"/><rect x="1661" y="866.4" width="8" height="3" rx="1.5"/><rect x="1645" y="871.4" width="8" height="3" rx="1.5"/><rect x="1661" y="871.4" width="8" height="3" rx="1.5"/><rect x="1645" y="876.4" width="8" height="3" rx="1.5"/><rect x="1661" y="876.4" width="8" height="3" rx="1.5"/><rect x="1645" y="881.4" width="8" height="3" rx="1.5"/><rect x="1661" y="881.4" width="8" height="3" rx="1.5"/><rect x="1645" y="886.4" width="8" height="3" rx="1.5"/><rect x="1661" y="886.4" width="8" height="3" rx="1.5"/><rect x="1645" y="891.4" width="8" height="3" rx="1.5"/><rect x="1661" y="891.4" width="8" height="3" rx="1.5"/><rect x="1645" y="896.4" width="8" height="3" rx="1.5"/><rect x="1661" y="896.4" width="8" height="3" rx="1.5"/><rect x="1645" y="901.4" width="8" height="3" rx="1.5"/><rect x="1661" y="901.4" width="8" height="3" rx="1.5"/><rect x="1645" y="906.4" width="8" height="3" rx="1.5"/><rect x="1661" y="906.4" width="8" height="3" rx="1.5"/><rect x="1645" y="911.4" width="8" height="3" rx="1.5"/><rect x="1661" y="911.4" width="8" height="3" rx="1.5"/><rect x="1645" y="916.4" width="8" height="3" rx="1.5"/><rect x="1661" y="916.4" width="8" height="3" rx="1.5"/><rect x="1645" y="921.4" width="8" height="3" rx="1.5"/><rect x="1661" y="921.4" width="8" height="3" rx="1.5"/><rect x="1645" y="926.4" width="8" height="3" rx="1.5"/><rect x="1661" y="926.4" width="8" height="3" rx="1.5"/><rect x="1645" y="931.4" width="8" height="3" rx="1.5"/><rect x="1661" y="931.4" width="8" height="3" rx="1.5"/><rect x="1645" y="936.4" width="8" height="3" rx="1.5"/><rect x="1661" y="936.4" width="8" height="3" rx="1.5"/><rect x="1645" y="941.4" width="8" height="3" rx="1.5"/><rect x="1661" y="941.4" width="8" height="3" rx="1.5"/><rect x="1645" y="946.4" width="8" height="3" rx="1.5"/><rect x="1661" y="946.4" width="8" height="3" rx="1.5"/><rect x="1645" y="951.4" width="8" height="3" rx="1.5"/><rect x="1661" y="951.4" width="8" height="3" rx="1.5"/><rect x="1645" y="956.4" width="8" height="3" rx="1.5"/><rect x="1661" y="956.4" width="8" height="3" rx="1.5"/></g></svg>
<div class="t" style="left:1596px;width:40px;text-align:right;top:646.5px;font-size:9px;letter-spacing:-0.4px;color:#707070">0</div>
<div class="a" style="left:1640px;top:650.5px;width:1px;height:1px;background:#777;"></div>
<div class="t" style="left:1596px;width:40px;text-align:right;top:684.5px;font-size:9px;letter-spacing:-0.4px;color:#707070">-5</div>
<div class="a" style="left:1640px;top:688.5px;width:1px;height:1px;background:#777;"></div>
<div class="t" style="left:1596px;width:40px;text-align:right;top:722.5px;font-size:9px;letter-spacing:-0.4px;color:#707070">-10</div>
<div class="a" style="left:1640px;top:726.5px;width:1px;height:1px;background:#777;"></div>
<div class="t" style="left:1596px;width:40px;text-align:right;top:761.5px;font-size:9px;letter-spacing:-0.4px;color:#707070">-15</div>
<div class="a" style="left:1640px;top:765.5px;width:1px;height:1px;background:#777;"></div>
<div class="t" style="left:1596px;width:40px;text-align:right;top:798.5px;font-size:9px;letter-spacing:-0.4px;color:#707070">-20</div>
<div class="a" style="left:1640px;top:802.5px;width:1px;height:1px;background:#777;"></div>
<div class="t" style="left:1596px;width:40px;text-align:right;top:843.0px;font-size:9px;letter-spacing:-0.4px;color:#707070">-30</div>
<div class="a" style="left:1640px;top:847.0px;width:1px;height:1px;background:#777;"></div>
<div class="t" style="left:1596px;width:40px;text-align:right;top:886.2px;font-size:9px;letter-spacing:-0.4px;color:#707070">-40</div>
<div class="a" style="left:1640px;top:890.2px;width:1px;height:1px;background:#777;"></div>
<div class="t" style="left:1596px;width:40px;text-align:right;top:930.3px;font-size:9px;letter-spacing:-0.4px;color:#707070">-50</div>
<div class="a" style="left:1640px;top:934.3px;width:1px;height:1px;background:#777;"></div>
<div class="t" style="left:1596px;width:40px;text-align:right;top:953.0px;font-size:9px;letter-spacing:-0.4px;color:#707070">-60</div>
<div class="a" style="left:1640px;top:957.0px;width:1px;height:1px;background:#777;"></div>
<div class="t" style="left:1645.5px;top:968.38px;font-size:9px;color:#777;">L</div>
<div class="t" style="left:1661px;top:968.38px;font-size:9px;color:#777;">R</div>
<div class="a" style="left:1636px;top:985px;width:1px;height:20px;background:#333;"></div>
<svg style="left:1645px;top:985px;" width="25" height="20" viewBox="0 0 25 20"><g fill="#444"><rect x="3" y="2" width="9" height="1.8"/><rect x="13" y="2" width="9" height="1.8"/><rect x="3" y="5" width="9" height="1.8"/><rect x="13" y="5" width="9" height="1.8"/><rect x="3" y="8" width="9" height="1.8"/><rect x="13" y="8" width="9" height="1.8"/><rect x="3" y="11" width="9" height="1.8"/><rect x="13" y="11" width="9" height="1.8"/><rect x="3" y="14" width="9" height="1.8"/><rect x="13" y="14" width="9" height="1.8"/><rect x="3" y="17" width="9" height="1.8"/><rect x="13" y="17" width="9" height="1.8"/></g></svg>
<div class="t" style="left:12px;top:990.84px;font-size:12px;color:#c0c0c0;letter-spacing:0.356px;">Длительность проекта: 01:07</div>
<div class="a" style="left:344px;top:1010px;width:48px;height:1px;background:#c87830;"></div>
<div class="a" style="left:393px;top:1010px;width:48px;height:1px;background:#666;"></div>
<div class="a" style="left:684.6px;top:612px;width:1.6px;height:366px;background:#f86a10;"></div>
<svg style="left:678px;top:603px;" width="16" height="18" viewBox="0 0 16 18"><path d="M2.5 2H12.5L7.5 14Z" fill="#6a3412" stroke="#f86a10" stroke-width="2" stroke-linejoin="round"/></svg>
<div class="a" style="left:690px;top:161px;width:216px;height:607px;background:#333;border:1px solid #3a3a3a;border-radius:12px"></div>
<div class="a" style="left:698px;top:237px;width:199px;height:34px;background:#3d3d3d;border-radius:10px"></div>
<div class="t" style="left:710px;top:178.60px;font-size:13px;color:#c6c6c6;letter-spacing:-0.089px;">Воспроизведение / пауза</div>
<div class="t" style="left:710px;top:212.60px;font-size:13px;color:#c6c6c6;letter-spacing:-0.118px;">Скрывать клип</div>
<div class="t" style="left:710px;top:247.60px;font-size:13px;color:#fff;letter-spacing:-0.055px;">Инструменты видео</div>
<div class="t" style="left:710px;top:281.60px;font-size:13px;color:#c6c6c6;letter-spacing:-0.056px;">Инструменты аудио</div>
<div class="t" style="left:710px;top:331.60px;font-size:13px;color:#c6c6c6;letter-spacing:-0.110px;">Разрезать клип</div>
<div class="t" style="left:710px;top:365.60px;font-size:13px;color:#c6c6c6;letter-spacing:-0.084px;">Добавить метку</div>
<div class="t" style="left:710px;top:399.60px;font-size:13px;color:#c6c6c6;letter-spacing:-0.156px;">Вставить стоп-кадр</div>
<div class="t" style="left:710px;top:433.60px;font-size:13px;color:#c6c6c6;letter-spacing:-0.071px;">Распознать сцены</div>
<div class="t" style="left:710px;top:467.60px;font-size:13px;color:#c6c6c6;letter-spacing:-0.077px;">Открепить аудио</div>
<div class="t" style="left:710px;top:517.60px;font-size:13px;color:#c6c6c6;letter-spacing:-0.688px;">О файле</div>
<div class="t" style="left:710px;top:567.60px;font-size:13px;color:#c6c6c6;letter-spacing:0.000px;">Копировать</div>
<div class="t" style="left:710px;top:601.60px;font-size:13px;color:#c6c6c6;letter-spacing:-0.161px;">Вырезать</div>
<div class="t" style="left:710px;top:635.60px;font-size:13px;color:#666;letter-spacing:-0.015px;">Вставить</div>
<div class="t" style="left:710px;top:669.60px;font-size:13px;color:#c6c6c6;letter-spacing:-0.154px;">Дублировать</div>
<div class="t" style="left:710px;top:703.60px;font-size:13px;color:#e2646c;letter-spacing:-0.106px;">Удалить</div>
<div class="t" style="left:710px;top:737.60px;font-size:13px;color:#e2646c;letter-spacing:-0.154px;">Удалить со сдвигом</div>
<svg style="left:860px;top:160px;" width="40" height="610" viewBox="0 0 40 610"><g fill="none" stroke="#a8a8a8" stroke-width="1.6" stroke-linecap="round" stroke-linejoin="round"><path d="M9.5 60.5Q17 52 24.5 60.5Q17 69 9.5 60.5Z"/><circle cx="17" cy="60.5" r="2"/><path d="M10 53.5L24.5 67.5" stroke="#333" stroke-width="3.5"/><path d="M10 53.5L24.5 67.5"/><path d="M15.5 124L19 127.5L15.5 131" stroke="#8a8a8a"/><circle cx="12.5" cy="181.5" r="3"/><circle cx="21.5" cy="181.5" r="3"/><path d="M14 179L21.5 170M20 179L12.5 170"/><path d="M11.5 206Q17 203.5 22.5 206V214Q22.5 217 17 220Q11.5 217 11.5 214Z"/><path d="M10 243.5Q10 241.5 12 241.5H13.5L15 239.5H19L20.5 241.5H22Q24 241.5 24 243.5V250.5Q24 252.5 22 252.5H12Q10 252.5 10 250.5Z"/><circle cx="17" cy="247" r="2.4"/><path d="M15.5 360L19 363.5L15.5 367" stroke="#8a8a8a"/><path d="M18 408H11Q9 408 9 410V415Q9 417 11 417H15"/><rect x="15.5" y="412.5" width="9" height="9" rx="2"/><path d="M18 442H11Q9 442 9 444V449Q9 451 11 451H15"/><rect x="15.5" y="446.5" width="9" height="9" rx="3" stroke-dasharray="3.2 2.5"/><path d="M18 510H11Q9 510 9 512V517Q9 519 11 519H15"/></g><g fill="none" stroke="#5a5a5a" stroke-width="1.6" stroke-linecap="round" stroke-linejoin="round"><rect x="11.5" y="475.5" width="11" height="14" rx="2"/></g><rect x="14" y="473.5" width="6" height="3" rx="1" fill="#5a5a5a"/><rect x="14.5" y="513.5" width="10.5" height="10.5" rx="2.5" fill="#a8a8a8"/><path d="M19.75 516V521.5M17 518.75H22.5" stroke="#333" stroke-width="1.6" stroke-linecap="round"/><g fill="none" stroke="#e2585f" stroke-width="1.8" stroke-linecap="round" stroke-linejoin="round"><path d="M10.5 547.5H23.5M11.5 547.5L12.5 556.5Q12.7 558 14 558H20Q21.3 558 21.5 556.5L22.5 547.5M14 547.5V545Q14 543 17 543Q20 543 20 545V547.5"/><path d="M10.5 581.5H23.5M11.5 581.5L12.5 590.5Q12.7 592 14 592H20Q21.3 592 21.5 590.5L22.5 581.5M14 581.5V579Q14 577 17 577Q20 577 20 579V581.5"/></g><path d="M15.5 90L19 93.5L15.5 97" fill="none" stroke="#fff" stroke-width="1.8" stroke-linecap="round" stroke-linejoin="round"/></svg>
<div class="a" style="left:897px;top:228px;width:206px;height:493px;background:#333;border:1px solid #3c3c3c;border-radius:12px"></div>
<div class="t" style="left:937px;top:247.60px;font-size:13px;color:#c6c6c6;letter-spacing:-0.236px;">Общие</div>
<div class="t" style="left:937px;top:281.60px;font-size:13px;color:#c6c6c6;letter-spacing:-0.197px;">Примененные эффекты</div>
<div class="t" style="left:937px;top:315.60px;font-size:13px;color:#c6c6c6;letter-spacing:0.008px;">Коррекция цвета</div>
<div class="t" style="left:937px;top:349.60px;font-size:13px;color:#c6c6c6;letter-spacing:-0.028px;">Поворот и кадрирование</div>
<div class="t" style="left:937px;top:383.60px;font-size:13px;color:#c6c6c6;letter-spacing:-0.124px;">Расположение</div>
<div class="t" style="left:937px;top:417.60px;font-size:13px;color:#c6c6c6;letter-spacing:-0.107px;">Масштаб и панорама</div>
<div class="t" style="left:937px;top:451.60px;font-size:13px;color:#c6c6c6;letter-spacing:0.007px;">Стабилизация</div>
<div class="t" style="left:937px;top:485.60px;font-size:13px;color:#c6c6c6;letter-spacing:0.225px;">Анимация</div>
<div class="t" style="left:937px;top:519.60px;font-size:13px;color:#c6c6c6;letter-spacing:-0.062px;">Выделение и цензура</div>
<div class="t" style="left:937px;top:553.60px;font-size:13px;color:#c6c6c6;letter-spacing:-0.289px;">Хромакей</div>
<div class="t" style="left:937px;top:587.60px;font-size:13px;color:#c6c6c6;letter-spacing:-0.233px;">Удаление фона</div>
<div class="t" style="left:937px;top:621.60px;font-size:13px;color:#c6c6c6;letter-spacing:-0.009px;">Распознавание сцен</div>
<div class="t" style="left:937px;top:655.60px;font-size:13px;color:#c6c6c6;letter-spacing:0.114px;">Логотип</div>
<div class="t" style="left:937px;top:689.60px;font-size:13px;color:#c6c6c6;letter-spacing:-0.018px;">Замедленное движение</div>
<svg style="left:0px;top:0px;" width="1680" height="1011" viewBox="0 0 1680 1011"><g fill="#f2b90f"><path d="M919.5 421L922 424L924.25 420L926.5 424L929 421V428H919.5Z"/><path d="M919.5 455L922 458L924.25 454L926.5 458L929 455V462H919.5Z"/><path d="M919.5 489L922 492L924.25 488L926.5 492L929 489V496H919.5Z"/><path d="M919.5 523L922 526L924.25 522L926.5 526L929 523V530H919.5Z"/><path d="M919.5 557L922 560L924.25 556L926.5 560L929 557V564H919.5Z"/><path d="M919.5 591L922 594L924.25 590L926.5 594L929 591V598H919.5Z"/></g></svg>
</body></html>
